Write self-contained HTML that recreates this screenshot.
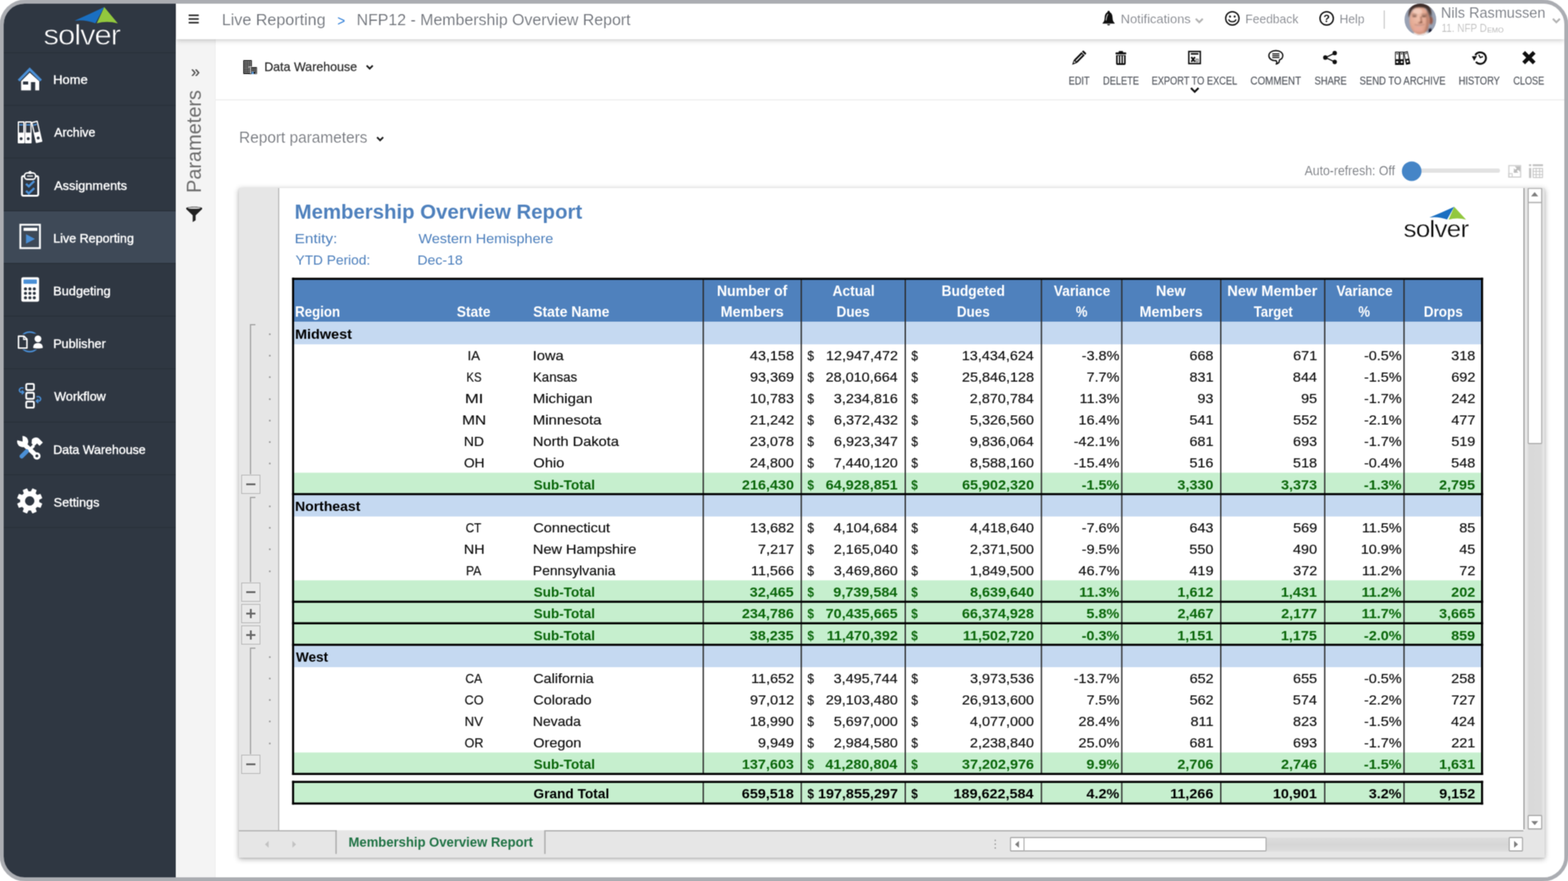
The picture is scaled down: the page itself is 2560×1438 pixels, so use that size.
<!DOCTYPE html><html lang="en"><head><meta charset="utf-8"><title>NFP12 - Membership Overview Report</title><style>
*{box-sizing:border-box}
html,body{margin:0;padding:0;background:#fff}
body{width:2560px;height:1438px;position:relative;overflow:hidden;font-family:"Liberation Sans",sans-serif;color:#333}
div,span,svg{position:absolute}
.t{white-space:nowrap;line-height:1;transform-origin:0 0}
#wrap{left:-8px;top:-8px;width:2576px;height:1454px;background:#fff;will-change:transform;filter:url(#soft)}
#frame{left:7px;top:7px;width:2562px;height:1440px;border-radius:43px;background:#abadb2;overflow:hidden}
#app{left:7px;top:7px;width:2548px;height:1426px;border-radius:34px;background:#fff;overflow:hidden}
#side{left:0;top:0;width:281px;height:1426px;background:#2f3742}
#sideedge{left:281px;top:0;width:3px;height:1426px;background:#fff}
.sep{left:0;width:281px;height:2px;background:#2a313b}
.nav{left:82px;color:#fff;font-weight:700;font-size:19px;letter-spacing:-.2px;height:24px;line-height:24px}
#active{left:0;top:339px;width:281px;height:85px;background:#3e4957}
#top{left:282px;top:0;width:2266px;height:58px;background:#fff;box-shadow:0 2px 8px rgba(0,0,0,.22);z-index:5}
.bc{font-size:26px;color:#7d7d7d;height:32px;line-height:32px;top:11px}
.tr{font-size:20.5px;color:#7a7a7a;height:26px;line-height:26px;top:13px}
#strip{left:282px;top:58px;width:64px;height:1368px;background:#f4f4f4;border-right:1px solid #ececec}
#main{left:346px;top:58px;width:2202px;height:1368px;background:#fff}
.tb{font-size:16.2px;color:#505050;-webkit-text-stroke:.35px #505050;letter-spacing:-.3px;height:20px;line-height:20px;top:116px;text-align:center;transform:translateX(-50%)}
#panel{left:384px;top:301px;width:2132px;height:1093px;background:#fff;box-shadow:0 2px 9px rgba(0,0,0,.32),0 1px 2px rgba(0,0,0,.12)}
#gutter{left:0;top:0;width:66px;height:1049px;background:#e6e6e6;border-right:2px solid #bdbdbd}
#botbar{display:none}
.row{left:89px;width:1942px}
.vl{width:2px;background:#2e2e2e}
.hl{left:87.3px;width:1943.7px;height:3px;background:#000}
.c{font-size:22.6px;height:30px;line-height:30px;color:#222;white-space:nowrap}
.c.b{font-size:23px}
.b{font-weight:700}
.g{color:#0a6a0a}
.k{color:#000}
.r{text-align:right;letter-spacing:.5px;margin-right:-.5px}
.r.b{letter-spacing:.3px;margin-right:-.3px}
.h{color:#fff;font-weight:700;font-size:23px;height:30px;line-height:30px;white-space:nowrap}
.hc{text-align:center;transform:translateX(-50%)}
.cc{text-align:center;transform:translateX(-50%)}
.ob{width:31px;height:31px;border:1.5px solid #a8a8a8;background:#e9e9e9;left:4px}
.ob i{position:absolute;left:7px;top:13px;width:15px;height:3px;background:#666}
.ob b{position:absolute;left:13px;top:7px;width:3px;height:15px;background:#666}
.ol{left:18px;width:2px;background:#a3a3a3}
.ot{left:18px;width:9px;height:2px;background:#a3a3a3}
.od{left:49px;width:3px;height:3px;border-radius:2px;background:#999}
</style></head><body>
<svg width="0" height="0" style="left:0;top:0"><defs><filter id="soft" x="0" y="0" width="100%" height="100%" color-interpolation-filters="sRGB"><feConvolveMatrix order="3" kernelMatrix="0.0625 0.1250 0.0625 0.1250 0.2500 0.1250 0.0625 0.1250 0.0625" edgeMode="duplicate" preserveAlpha="true"/></filter></defs></svg>
<div id="wrap"><div id="frame"><div id="app">
<div id="side">
<div id="active"></div>
<div class="sep" style="top:79px"></div>
<div class="sep" style="top:165px"></div>
<div class="sep" style="top:251px"></div>
<div class="sep" style="top:337px"></div>
<div class="sep" style="top:423px"></div>
<div class="sep" style="top:509px"></div>
<div class="sep" style="top:595px"></div>
<div class="sep" style="top:682px"></div>
<div class="sep" style="top:768px"></div>
<div class="sep" style="top:854px"></div>
<svg style="left:0;top:0" width="1" height="1" overflow="visible"><path d="M115.7,27.8 Q139.9,17.3 164.2,5.6 L149.8,31.9 Q132.8,25.6 115.7,27.8 Z" fill="#1a6fc1"/><path d="M164.2,5.6 L186.4,32.2 Q169.2,27.4 152.0,31.9 Z" fill="#92c83e"/><text transform="translate(65.0 66.7) scale(1.1 1)" x="0" y="0" font-family="Liberation Sans, sans-serif" font-size="46" letter-spacing="-1.5" fill="#fff" stroke="#2f3742" stroke-width="0.9">solver</text></svg>
<svg style="left:20px;top:101px" width="44" height="44" viewBox="0 0 44 44" overflow="visible" ><path d="M22.5,11.5 L8.5,25.5 V40.5 H38 V25.5 Z M11.5,26 H20 V31 H11.5 Z M24.5,27 H31.5 V40.5 H24.5 Z" fill="#fff" fill-rule="evenodd"/><path d="M4.5,24.5 L22.5,6 L41,24.5" fill="none" stroke="#4a8fd6" stroke-width="4.2" stroke-linejoin="miter"/></svg>
<svg style="left:20px;top:187px" width="44" height="44" viewBox="0 0 44 44" overflow="visible" ><rect x="3" y="5" width="11" height="36" rx="1.2" fill="#fff"/><rect x="5" y="7.2" width="7" height="16.2" fill="#2f3742"/><rect x="5.6" y="9.6" width="5.8" height="2.4" fill="#4a8fd6"/><circle cx="8.5" cy="33.5" r="2.4" fill="#2f3742"/><rect x="14.6" y="5" width="11" height="36" rx="1.2" fill="#fff"/><rect x="16.6" y="7.2" width="7" height="16.2" fill="#2f3742"/><rect x="17.2" y="9.6" width="5.8" height="2.4" fill="#4a8fd6"/><circle cx="20.1" cy="33.5" r="2.4" fill="#2f3742"/><g transform="rotate(-13 34 22)"><rect x="28.5" y="4.5" width="11" height="35.5" rx="1.2" fill="#fff"/><rect x="30.5" y="6.7" width="7" height="16.0" fill="#2f3742"/><rect x="31.1" y="9.1" width="5.8" height="2.4" fill="#4a8fd6"/><circle cx="34.0" cy="32.5" r="2.4" fill="#2f3742"/></g></svg>
<svg style="left:20px;top:274px" width="44" height="44" viewBox="0 0 44 44" overflow="visible" ><rect x="9.8" y="7.5" width="26.6" height="32" rx="2.5" fill="none" stroke="#fff" stroke-width="3"/><rect x="14" y="2.2" width="18" height="10.5" rx="4.5" fill="#2f3742" stroke="#fff" stroke-width="2.4"/><circle cx="23" cy="1.5" r="2.6" fill="#fff"/><rect x="18" y="6.4" width="10" height="1.8" rx=".9" fill="#fff"/><path d="M16.5,20 L21,24.2 L30,15.5" fill="none" stroke="#4a8fd6" stroke-width="3.6"/><path d="M16.5,31.5 L21,35.7 L30,27" fill="none" stroke="#4a8fd6" stroke-width="3.6"/></svg>
<svg style="left:20px;top:360px" width="44" height="44" viewBox="0 0 44 44" overflow="visible" ><rect x="7.2" y="0.8" width="32" height="38.2" fill="none" stroke="#fff" stroke-width="3"/><rect x="12.5" y="5.8" width="22.5" height="5" fill="#fff"/><path d="M16.5,16.2 L31,24 L16.5,31.7 Z" fill="#4a8fd6"/></svg>
<svg style="left:20px;top:446px" width="44" height="44" viewBox="0 0 44 44" overflow="visible" ><rect x="8.8" y="0.6" width="29" height="40" rx="3" fill="#fff"/><rect x="12.4" y="4.2" width="21.8" height="7" rx="1" fill="#4a8fd6"/><circle cx="15.6" cy="19.6" r="2.5" fill="#2f3742"/><circle cx="15.6" cy="26.8" r="2.5" fill="#2f3742"/><circle cx="15.6" cy="34.0" r="2.5" fill="#2f3742"/><circle cx="22.8" cy="19.6" r="2.5" fill="#2f3742"/><circle cx="22.8" cy="26.8" r="2.5" fill="#2f3742"/><circle cx="22.8" cy="34.0" r="2.5" fill="#2f3742"/><circle cx="30.0" cy="19.6" r="2.5" fill="#2f3742"/><circle cx="30.0" cy="26.8" r="2.5" fill="#2f3742"/><circle cx="30.0" cy="34.0" r="2.5" fill="#2f3742"/></svg>
<svg style="left:20px;top:532px" width="44" height="44" viewBox="0 0 44 44" overflow="visible" ><g transform="translate(0 -2.5)"><circle cx="22.5" cy="22.5" r="16" fill="none" stroke="#4a8fd6" stroke-width="2.6"/><rect x="1" y="10" width="21" height="25" fill="#2f3742"/><rect x="26" y="9" width="19" height="26" fill="#2f3742"/><path d="M4.2,13.2 H13 L18,18.2 V32.6 H4.2 Z" fill="none" stroke="#fff" stroke-width="2.4" stroke-linejoin="round"/><path d="M12.6,13.4 V18.6 H17.8" fill="none" stroke="#fff" stroke-width="1.8"/><circle cx="36" cy="17.6" r="5.6" fill="#fff"/><path d="M28.2,32.5 C28.2,26.5 31,24.6 36,24.6 C41,24.6 43.8,26.5 43.8,32.5 C41,33.6 31,33.6 28.2,32.5 Z" fill="#fff"/></g></svg>
<svg style="left:20px;top:618px" width="44" height="44" viewBox="0 0 44 44" overflow="visible" ><rect x="16.8" y="2.6" width="12.6" height="10" rx="2" fill="none" stroke="#fff" stroke-width="2.8"/><rect x="16.8" y="17" width="12.6" height="10" rx="2" fill="none" stroke="#fff" stroke-width="2.8"/><rect x="16.8" y="31.4" width="12.6" height="10" rx="2" fill="none" stroke="#fff" stroke-width="2.8"/><path d="M12.5,9.5 C6.5,7.5 3.5,13 7.5,16.2 L11.5,16.2" fill="none" stroke="#4a8fd6" stroke-width="2.2"/><path d="M9.5,13.2 L12.6,16.3 L9.5,19.4" fill="none" stroke="#4a8fd6" stroke-width="2.2"/><path d="M33.5,23.8 C39.5,21.8 42.5,27.3 38.5,30.5 L34.5,30.5" fill="none" stroke="#4a8fd6" stroke-width="2.2"/><path d="M36.5,27.5 L33.4,30.6 L36.5,33.7" fill="none" stroke="#4a8fd6" stroke-width="2.2"/></svg>
<svg style="left:20px;top:705px" width="44" height="44" viewBox="0 0 44 44" overflow="visible" ><g transform="translate(0 -2.8)"><path d="M8,12 L34,36" stroke="#fff" stroke-width="7.5" stroke-linecap="round" fill="none"/><circle cx="11" cy="12.5" r="9.2" fill="#fff"/><path d="M11,12.5 L2,1 L20,0 Z" fill="#2f3742" transform="rotate(-38 11 12.5)"/><circle cx="34.2" cy="36" r="6" fill="#fff"/><circle cx="34.2" cy="36" r="2.4" fill="#2f3742"/><path d="M26,9 C30,5 35,5 38,8 L44,14 L38.5,19.5 L34.5,15.5 L30,20 L25.5,15.5 Z" fill="#fff"/><path d="M25.5,19.5 L29,23" stroke="#fff" stroke-width="6" fill="none"/><path d="M9.5,36.5 L17.5,28.5" stroke="#4a8fd6" stroke-width="7" stroke-linecap="round" fill="none"/></g></svg>
<svg style="left:20px;top:791px" width="44" height="44" viewBox="0 0 44 44" overflow="visible" ><path d="M37.09,17.10 L42.45,17.44 L42.45,23.76 L37.09,24.10 L35.29,28.44 L38.84,32.47 L34.37,36.94 L30.34,33.39 L26.00,35.19 L25.66,40.55 L19.34,40.55 L19.00,35.19 L14.66,33.39 L10.63,36.94 L6.16,32.47 L9.71,28.44 L7.91,24.10 L2.55,23.76 L2.55,17.44 L7.91,17.10 L9.71,12.76 L6.16,8.73 L10.63,4.26 L14.66,7.81 L19.00,6.01 L19.34,0.65 L25.66,0.65 L26.00,6.01 L30.34,7.81 L34.37,4.26 L38.84,8.73 L35.29,12.76 Z M30.9,20.6 A8.4,8.4 0 1 0 14.1,20.6 A8.4,8.4 0 1 0 30.9,20.6 Z" fill="#fff" fill-rule="evenodd" stroke="#fff" stroke-width="1.5" stroke-linejoin="round" transform="rotate(22.5 22.5 20.6)"/></svg>
</div><div id="sideedge"></div>
<div id="top">
<svg style="left:20px;top:17px" width="18" height="16" viewBox="0 0 18 16" overflow="visible" ><path d="M0,2 H16.5 M0,8 H16.5 M0,14 H16.5" stroke="#222" stroke-width="2.7" fill="none"/></svg>
<svg style="left:1511px;top:11px" width="22" height="26" viewBox="0 0 22 26" overflow="visible" ><path d="M11,2.6 C6.2,3.2 4.8,7.5 4.6,12 C4.4,16.5 3.4,18.6 1.2,20.4 L1.2,21.6 H20.8 V20.4 C18.6,18.6 17.6,16.5 17.4,12 C17.2,7.5 15.8,3.2 11,2.6 Z" fill="#0f0f0f"/><circle cx="11" cy="2.4" r="1.9" fill="#0f0f0f"/><path d="M8.4,22.6 A2.7,2.7 0 0 0 13.6,22.6 Z" fill="#0f0f0f"/><path d="M6.8,16.5 C7.4,12 7.6,8.4 10,6" stroke="#fff" stroke-width="1.1" fill="none"/></svg>
<svg style="left:1663px;top:23px" width="14" height="10" viewBox="0 0 14 10" overflow="visible" ><path d="M1.3,1.6 L7,7.3 L12.7,1.6" fill="none" stroke="#b3b3b3" stroke-width="3"/></svg>
<svg style="left:1711.4px;top:10.7px" width="26" height="26" viewBox="0 0 26 26" overflow="visible" ><circle cx="13" cy="13" r="10.9" fill="none" stroke="#0f0f0f" stroke-width="2.2"/><circle cx="9.2" cy="10" r="1.7" fill="#0f0f0f"/><circle cx="16.8" cy="10" r="1.7" fill="#0f0f0f"/><path d="M7,14.6 C8.6,19.8 17.4,19.8 19,14.6" fill="none" stroke="#0f0f0f" stroke-width="2"/></svg>
<svg style="left:1864.6999999999998px;top:10.7px" width="26" height="26" viewBox="0 0 26 26" overflow="visible" ><circle cx="13" cy="13" r="10.9" fill="none" stroke="#0f0f0f" stroke-width="2.3"/><text x="13" y="19.2" text-anchor="middle" font-family="Liberation Sans, sans-serif" font-weight="700" font-size="17" fill="#0f0f0f">?</text></svg>
<div style="left:1971px;top:10.5px;width:2px;height:30.5px;background:#cfcfcf"></div>
<svg style="left:2005.3000000000002px;top:-0.3999999999999986px" width="52" height="52" viewBox="0 0 52 52" overflow="visible" ><defs><clipPath id="avc"><circle cx="26" cy="26" r="25.9"/></clipPath><filter id="avb" x="-20%" y="-20%" width="140%" height="140%"><feGaussianBlur stdDeviation="0.9"/></filter><radialGradient id="avg" cx="0.42" cy="0.38" r="0.75"><stop offset="0" stop-color="#efc0ab"/><stop offset="0.55" stop-color="#e3a892"/><stop offset="1" stop-color="#c98a74"/></radialGradient></defs><g clip-path="url(#avc)"><rect x="-4" y="-4" width="60" height="60" fill="#99a2b4"/><g filter="url(#avb)"><path d="M10,60 C12,48 18,44 26,46 C34,44 42,47 46,60 Z" fill="#f6f3f1"/><path d="M39,41.5 L43.6,40 L45,46.5 L40.5,48.5 Z" fill="#15152a"/><ellipse cx="43.2" cy="27.5" rx="3.2" ry="6.4" fill="#93594a"/><ellipse cx="24.6" cy="27.5" rx="16.4" ry="23" fill="url(#avg)"/><path d="M36.5,12 C40,18 41,28 39,40 C37,45 34,48 31,50 C35,42 36.5,30 35,18 Z" fill="#b27a66" opacity=".75"/><path d="M7,23 C5,8 13,-2 26,-2 C39,-2 46,7 44,24 C43,17 40.5,11 34,7.6 C26,5.2 16,6 12.4,10.6 C10,14 9.4,19 7,23 Z" fill="#3f2f29"/><path d="M37.5,8 C41.5,12 43,19 41.6,25 C40,20 39,14 36,10 Z" fill="#5a4a44"/><ellipse cx="21.5" cy="12.5" rx="7.5" ry="4.6" fill="#f3cdbd" opacity=".9"/><ellipse cx="16.4" cy="20.6" rx="3.6" ry="1.5" fill="#7b564b"/><ellipse cx="31.8" cy="20.6" rx="3.8" ry="1.6" fill="#74503f"/><path d="M12,18.2 C15,16.6 18,16.8 20.5,18 M28,18 C31,16.6 34,16.8 36.5,18.4" stroke="#8a6456" stroke-width="1.2" fill="none"/><path d="M26.5,21 C27.5,25 28,28 27,30.6 C25.6,31.6 24,31.4 22.6,30.6" stroke="#9a5d48" stroke-width="2.2" fill="none" opacity=".85"/><ellipse cx="27.4" cy="30.2" rx="2" ry="1.5" fill="#7c4a38"/><path d="M16.5,34.2 C20,36.6 29,36.8 32.6,33.8 C30,38 20,38.2 16.5,34.2 Z" fill="#d9b3b1"/><path d="M16.5,34.2 C20,35.4 29,35.4 32.6,33.8" stroke="#a86a5c" stroke-width="1" fill="none"/><ellipse cx="23" cy="42" rx="8" ry="3.4" fill="#e9a99a" opacity=".8"/></g></g></svg>
<svg style="left:2246px;top:23px" width="14" height="10" viewBox="0 0 14 10" overflow="visible" ><path d="M1.3,1.6 L7,7.3 L12.7,1.6" fill="none" stroke="#b3b3b3" stroke-width="3"/></svg>
</div>
<div id="strip">
<div class="t " style="left:23px;top:39px;font-size:26px;color:#555;width:16px;height:28px;line-height:28px;text-align:center">&raquo;</div>
<svg style="left:15px;top:273px" width="28" height="26" viewBox="0 0 28 26" overflow="visible" ><path d="M1,2.2 C6,0 22,0 27,2.2 L27,4.2 L16.4,14.6 V22.4 L11.6,25.6 V14.6 L1,4.2 Z" fill="#222"/><ellipse cx="14" cy="2.6" rx="10.5" ry="1.2" fill="#f4f4f4"/></svg>
</div>
<div id="main">
<svg style="left:45px;top:33.7px" width="24" height="24" viewBox="0 0 24 24" overflow="visible" ><rect x="0.2" y="0.2" width="14" height="22.6" fill="#0f0f0f"/><rect x="9.2" y="11.6" width="13.3" height="11.2" fill="#0f0f0f"/><path d="M8.6,11.2 H14.8 V11.2" stroke="#fff" stroke-width="0.9" fill="none"/><rect x="2.10" y="2.20" width="1.7" height="1.9" fill="#fff"/><rect x="2.10" y="5.50" width="1.7" height="1.9" fill="#fff"/><rect x="2.10" y="8.80" width="1.7" height="1.9" fill="#fff"/><rect x="2.10" y="12.10" width="1.7" height="1.9" fill="#fff"/><rect x="2.10" y="15.40" width="1.7" height="1.9" fill="#fff"/><rect x="2.10" y="18.70" width="1.7" height="1.9" fill="#fff"/><rect x="5.05" y="2.20" width="1.7" height="1.9" fill="#fff"/><rect x="5.05" y="5.50" width="1.7" height="1.9" fill="#fff"/><rect x="5.05" y="8.80" width="1.7" height="1.9" fill="#fff"/><rect x="5.05" y="12.10" width="1.7" height="1.9" fill="#fff"/><rect x="5.05" y="15.40" width="1.7" height="1.9" fill="#fff"/><rect x="5.05" y="18.70" width="1.7" height="1.9" fill="#fff"/><rect x="8.00" y="2.20" width="1.7" height="1.9" fill="#fff"/><rect x="8.00" y="5.50" width="1.7" height="1.9" fill="#fff"/><rect x="8.00" y="8.80" width="1.7" height="1.9" fill="#fff"/><rect x="8.00" y="12.10" width="1.7" height="1.9" fill="#fff"/><rect x="8.00" y="15.40" width="1.7" height="1.9" fill="#fff"/><rect x="8.00" y="18.70" width="1.7" height="1.9" fill="#fff"/><rect x="10.95" y="2.20" width="1.7" height="1.9" fill="#fff"/><rect x="10.95" y="5.50" width="1.7" height="1.9" fill="#fff"/><rect x="10.95" y="8.80" width="1.7" height="1.9" fill="#fff"/><rect x="10.95" y="12.10" width="1.7" height="1.9" fill="#fff"/><rect x="10.95" y="15.40" width="1.7" height="1.9" fill="#fff"/><rect x="10.95" y="18.70" width="1.7" height="1.9" fill="#fff"/><rect x="11.10" y="13.80" width="1.6" height="1.7" fill="#fff"/><rect x="11.10" y="17.00" width="1.6" height="1.7" fill="#fff"/><rect x="11.10" y="20.20" width="1.6" height="1.7" fill="#fff"/><rect x="14.00" y="13.80" width="1.6" height="1.7" fill="#fff"/><rect x="14.00" y="17.00" width="1.6" height="1.7" fill="#fff"/><rect x="16.90" y="13.80" width="1.6" height="1.7" fill="#fff"/><rect x="16.90" y="17.00" width="1.6" height="1.7" fill="#fff"/><rect x="19.80" y="13.80" width="1.6" height="1.7" fill="#fff"/><rect x="19.80" y="17.00" width="1.6" height="1.7" fill="#fff"/><rect x="19.80" y="20.20" width="1.6" height="1.7" fill="#fff"/><rect x="13.6" y="19.2" width="3.8" height="3.8" fill="#5b9bdc"/></svg>
<svg style="left:245px;top:41px" width="14" height="10" viewBox="0 0 14 10" overflow="visible" ><path d="M1.6,2 L6.6,7 L11.6,2" fill="none" stroke="#1a1a1a" stroke-width="2.7"/></svg>
<svg style="left:1394px;top:15px" width="32" height="32" viewBox="0 0 32 32" overflow="visible" ><g transform="translate(-0.9 0.9) rotate(45 16 15)"><rect x="12.3" y="0.6" width="7.4" height="22" rx="1.4" fill="#0f0f0f"/><rect x="15.2" y="6.6" width="1.7" height="14.6" fill="#fff"/><rect x="11.8" y="3.7" width="8.4" height="1.3" fill="#fff"/><path d="M12.3,22.5 H19.7 L16,30.2 Z" fill="#0f0f0f"/><path d="M14.2,23.4 H17.8 L16,26.6 Z" fill="#fff"/></g></svg>
<svg style="left:1462px;top:15px" width="32" height="32" viewBox="0 0 32 32" overflow="visible" ><rect x="7.2" y="6.6" width="17.6" height="3.2" rx="1.4" fill="#0f0f0f"/><rect x="12.4" y="4.2" width="7.2" height="3.4" rx="1.4" fill="#0f0f0f"/><path d="M8.2,11 H23.8 V24.6 C23.8,26 23,26.9 21.8,26.9 H10.2 C9,26.9 8.2,26 8.2,24.6 Z" fill="#0f0f0f"/><rect x="10.8" y="12" width="2" height="12.2" fill="#fff"/><rect x="15" y="12" width="2" height="12.2" fill="#fff"/><rect x="19.2" y="12" width="2" height="12.2" fill="#fff"/></svg>
<svg style="left:1582px;top:15px" width="32" height="32" viewBox="0 0 32 32" overflow="visible" ><rect x="6.9" y="5.0" width="18.8" height="19.8" fill="#fff" stroke="#0f0f0f" stroke-width="2.3"/><rect x="10.2" y="7.6" width="12.4" height="2.6" fill="#0f0f0f"/><path d="M11,14.2 L17,21.8 M17,14.2 L11,21.8" stroke="#0f0f0f" stroke-width="2.7" fill="none"/><rect x="18.6" y="17.4" width="3.6" height="4.6" fill="#ddd" stroke="#555" stroke-width="1"/></svg>
<svg style="left:1715px;top:15px" width="32" height="32" viewBox="0 0 32 32" overflow="visible" ><path d="M16,3.6 C8.8,3.6 4.6,7.2 4.6,11.8 C4.6,16.4 8.8,20 14.6,20 C15.2,20 15.8,20 16.4,19.9 C17.6,21.4 18.2,23.2 16.6,25.6 C20.4,24.6 22,22 21.8,19 C25.4,17.6 27.4,15 27.4,11.8 C27.4,7.2 23.2,3.6 16,3.6 Z" fill="#fff" stroke="#0f0f0f" stroke-width="2.1" stroke-linejoin="round"/><path d="M10.2,8.8 H21.8 M10.2,11.8 H21.8 M10.2,14.8 H21.8" stroke="#0f0f0f" stroke-width="1.8"/></svg>
<svg style="left:1804px;top:15px" width="32" height="32" viewBox="0 0 32 32" overflow="visible" ><path d="M23,7.8 L8.2,14.9 L23,22" fill="none" stroke="#0f0f0f" stroke-width="1.9"/><circle cx="23.1" cy="7.7" r="3.6" fill="#0f0f0f"/><circle cx="7.8" cy="14.9" r="3.6" fill="#0f0f0f"/><circle cx="23.1" cy="22.1" r="3.6" fill="#0f0f0f"/></svg>
<svg style="left:1922px;top:15px" width="32" height="32" viewBox="0 0 32 32" overflow="visible" ><rect x="3.6" y="5.4" width="7.2" height="21.6" fill="#0f0f0f"/><rect x="4.9" y="6.9" width="4.6" height="10.8" fill="#fff"/><rect x="5.800000000000001" y="8.0" width="2.8" height="1.5" fill="#0f0f0f"/><circle cx="7.2" cy="22.2" r="1.7" fill="#fff"/><rect x="10.9" y="5.4" width="7.2" height="21.6" fill="#0f0f0f"/><rect x="12.200000000000001" y="6.9" width="4.6" height="10.8" fill="#fff"/><rect x="13.100000000000001" y="8.0" width="2.8" height="1.5" fill="#0f0f0f"/><circle cx="14.5" cy="22.2" r="1.7" fill="#fff"/><g transform="rotate(-12 23 16)"><rect x="19.4" y="5" width="7.2" height="21.2" fill="#0f0f0f"/><rect x="20.7" y="6.5" width="4.6" height="10.6" fill="#fff"/><rect x="21.599999999999998" y="7.6" width="2.8" height="1.5" fill="#0f0f0f"/><circle cx="23.0" cy="21.4" r="1.7" fill="#fff"/></g></svg>
<svg style="left:2047px;top:15px" width="32" height="32" viewBox="0 0 32 32" overflow="visible" ><path d="M9.6,11.0 A9.4,9.4 0 1 1 10.6,22.0" fill="none" stroke="#0f0f0f" stroke-width="3"/><path d="M4.0,13.0 L12.6,12.2 L7.8,20.2 Z" fill="#0f0f0f"/><path d="M15.3,10.2 L17.8,14.9 L22.2,13.3" fill="none" stroke="#0f0f0f" stroke-width="2"/></svg>
<svg style="left:2128px;top:15px" width="32" height="32" viewBox="0 0 32 32" overflow="visible" ><path d="M7.6,6.6 L24.8,23.8 M24.8,6.6 L7.6,23.8" stroke="#0f0f0f" stroke-width="6.3" fill="none"/></svg>
<svg style="left:1591.4px;top:78.1px" width="16" height="11" viewBox="0 0 16 11" overflow="visible" ><path d="M1.4,1.6 L7.6,7.8 L13.8,1.6" fill="none" stroke="#111" stroke-width="3.1"/></svg>
<div style="left:0;top:98px;width:2202px;height:2px;background:#efefef"></div>
<svg style="left:262px;top:158px" width="14" height="10" viewBox="0 0 14 10" overflow="visible" ><path d="M1.6,2 L6.6,7 L11.6,2" fill="none" stroke="#1a1a1a" stroke-width="2.7"/></svg>
<div style="left:1964px;top:211px;width:133px;height:7px;border-radius:4px;background:#e2e2e2"></div>
<svg style="left:0;top:0" width="2202" height="300"><circle cx="1952.8" cy="215.4" r="16" fill="#4585c7"/></svg>
<svg style="left:0;top:0" width="2202" height="300" viewBox="0 0 2202 300"><rect x="2111.45" y="206.35" width="19.20" height="18.60" fill="none" stroke="#d0d0d0" stroke-width="1.9"/><rect x="2111.35" y="219.45" width="5.50" height="5.60" fill="none" stroke="#d0d0d0" stroke-width="1.7"/><path d="M2120.20,217.40 L2128.60,208.60" stroke="#bdbdbd" stroke-width="3.4" fill="none"/><path d="M2121.00,207.60 L2130.00,207.40 L2129.80,216.40 Z" fill="#bdbdbd"/><path d="M2119.60,210.40 L2119.60,218.00 L2127.00,218.00 Z" fill="#bdbdbd"/><rect x="2144.30" y="204.00" width="3.60" height="3.30" fill="#c4c4c4"/><rect x="2144.30" y="210.20" width="3.60" height="16.30" fill="#c4c4c4"/><rect x="2150.40" y="204.00" width="16.80" height="3.30" fill="#c4c4c4"/><rect x="2151.15" y="210.95" width="15.30" height="14.80" fill="none" stroke="#c6c6c6" stroke-width="1.5"/><rect x="2155.30" y="210.20" width="1.40" height="16.30" fill="#c6c6c6"/><rect x="2150.40" y="214.93" width="16.80" height="1.40" fill="#c6c6c6"/><rect x="2160.90" y="210.20" width="1.40" height="16.30" fill="#c6c6c6"/><rect x="2150.40" y="220.37" width="16.80" height="1.40" fill="#c6c6c6"/></svg>

</div>
<div id="panel">
<div id="gutter">
<div class="ot" style="top:222px"></div>
<div class="ol" style="top:222px;height:244.97500000000002px"></div>
<div class="ob" style="top:467.975px"><i></i></div>
<div class="ot" style="top:504.03999999999996px"></div>
<div class="ol" style="top:504.03999999999996px;height:138.58500000000004px"></div>
<div class="ob" style="top:643.625px"><i></i></div>
<div class="ob" style="top:678.7550000000001px"><i></i><b></b></div>
<div class="ob" style="top:713.885px"><i></i><b></b></div>
<div class="ot" style="top:749.95px"></div>
<div class="ol" style="top:749.95px;height:173.71499999999992px"></div>
<div class="ob" style="top:924.665px"><i></i></div>
<div class="od" style="top:237.1px"></div>
<div class="od" style="top:272.2px"></div>
<div class="od" style="top:307.3px"></div>
<div class="od" style="top:342.5px"></div>
<div class="od" style="top:377.6px"></div>
<div class="od" style="top:412.7px"></div>
<div class="od" style="top:447.8px"></div>
<div class="od" style="top:518.1px"></div>
<div class="od" style="top:553.2px"></div>
<div class="od" style="top:588.4px"></div>
<div class="od" style="top:623.5px"></div>
<div class="od" style="top:764.0px"></div>
<div class="od" style="top:799.1px"></div>
<div class="od" style="top:834.3px"></div>
<div class="od" style="top:869.4px"></div>
<div class="od" style="top:904.5px"></div>
</div>
<svg style="left:0;top:0" width="1" height="1" overflow="visible"><path d="M1943.8,48.0 Q1964.0,39.9 1984.2,30.5 L1972.6,51.3 Q1958.2,46.1 1943.8,48.0 Z" fill="#1a6fc1"/><path d="M1984.2,30.5 L2003.6,51.5 Q1989.3,47.6 1975.1,51.5 Z" fill="#92c83e"/><text transform="translate(1901.4 80.4) scale(1.1 1)" x="0" y="0" font-family="Liberation Sans, sans-serif" font-size="38.6" letter-spacing="-1.1" fill="#0a0a0a" stroke="#fff" stroke-width="0.5">solver</text></svg>
<svg style="left:0;top:0" width="2132" height="1049" viewBox="0 0 2132 1049"><rect x="89.20" y="148.80" width="1939.80" height="69.45" fill="#4f81bd"/><rect x="89.20" y="218.25" width="1939.80" height="36.78" fill="#c5d9f1"/><rect x="89.20" y="464.56" width="1939.80" height="34.98" fill="#c6efce"/><rect x="89.20" y="499.54" width="1939.80" height="36.53" fill="#c5d9f1"/><rect x="89.20" y="640.21" width="1939.80" height="34.98" fill="#c6efce"/><rect x="89.20" y="675.34" width="1939.80" height="34.98" fill="#c6efce"/><rect x="89.20" y="710.47" width="1939.80" height="34.98" fill="#c6efce"/><rect x="89.20" y="745.45" width="1939.80" height="36.53" fill="#c5d9f1"/><rect x="89.20" y="921.25" width="1939.80" height="34.98" fill="#c6efce"/><rect x="89.20" y="969.95" width="1939.80" height="33.85" fill="#c6efce"/><rect x="757.15" y="148.80" width="2.10" height="807.43" fill="#2b2b2b"/><rect x="757.15" y="969.95" width="2.10" height="33.85" fill="#2b2b2b"/><rect x="917.15" y="148.80" width="2.10" height="807.43" fill="#2b2b2b"/><rect x="917.15" y="969.95" width="2.10" height="33.85" fill="#2b2b2b"/><rect x="1086.95" y="148.80" width="2.10" height="807.43" fill="#2b2b2b"/><rect x="1086.95" y="969.95" width="2.10" height="33.85" fill="#2b2b2b"/><rect x="1309.25" y="148.80" width="2.10" height="807.43" fill="#2b2b2b"/><rect x="1309.25" y="969.95" width="2.10" height="33.85" fill="#2b2b2b"/><rect x="1440.45" y="148.80" width="2.10" height="807.43" fill="#2b2b2b"/><rect x="1440.45" y="969.95" width="2.10" height="33.85" fill="#2b2b2b"/><rect x="1602.05" y="148.80" width="2.10" height="807.43" fill="#2b2b2b"/><rect x="1602.05" y="969.95" width="2.10" height="33.85" fill="#2b2b2b"/><rect x="1771.75" y="148.80" width="2.10" height="807.43" fill="#2b2b2b"/><rect x="1771.75" y="969.95" width="2.10" height="33.85" fill="#2b2b2b"/><rect x="1901.25" y="148.80" width="2.10" height="807.43" fill="#2b2b2b"/><rect x="1901.25" y="969.95" width="2.10" height="33.85" fill="#2b2b2b"/><rect x="86.80" y="146.35" width="1944.60" height="3.45" fill="#000"/><rect x="86.80" y="497.82" width="1944.60" height="3.44" fill="#000"/><rect x="86.80" y="673.47" width="1944.60" height="3.44" fill="#000"/><rect x="86.80" y="708.60" width="1944.60" height="3.44" fill="#000"/><rect x="86.80" y="743.73" width="1944.60" height="3.44" fill="#000"/><rect x="86.80" y="954.51" width="1944.60" height="3.44" fill="#000"/><rect x="86.80" y="146.35" width="3.40" height="811.60" fill="#000"/><rect x="2028.00" y="146.35" width="3.40" height="811.60" fill="#000"/><rect x="86.80" y="967.50" width="1944.60" height="3.45" fill="#000"/><rect x="86.80" y="1002.80" width="1944.60" height="3.45" fill="#000"/><rect x="86.80" y="967.50" width="3.40" height="38.75" fill="#000"/><rect x="2028.00" y="967.50" width="3.40" height="38.75" fill="#000"/></svg>
<svg style="left:0;top:0" width="2132" height="1093" viewBox="0 0 2132 1093"><defs><linearGradient id="vtr" x1="0" x2="1" y1="0" y2="0"><stop offset="0" stop-color="#e9e9e9"/><stop offset="0.14" stop-color="#e4e4e4"/><stop offset="0.2" stop-color="#d9d9d9"/><stop offset="0.84" stop-color="#dadada"/><stop offset="0.9" stop-color="#e5e5e5"/><stop offset="1" stop-color="#e3e3e3"/></linearGradient><linearGradient id="htr" x1="0" x2="0" y1="0" y2="1"><stop offset="0" stop-color="#dcdcdc"/><stop offset="0.5" stop-color="#d6d6d6"/><stop offset="1" stop-color="#dddddd"/></linearGradient></defs><rect x="2099.20" y="-1.00" width="33.00" height="1049.50" fill="url(#vtr)" /><rect x="2097.10" y="-1.00" width="2.10" height="1047.80" fill="#a0a0a0" /><rect x="2105.10" y="0.50" width="21.90" height="23.10" fill="#fff" stroke="#a3a3a3" stroke-width="1.6" rx="0.8"/><path d="M2109.70,13.40 L2115.55,6.60 L2121.40,13.40 Z" fill="#7d7d7d"/><rect x="2105.10" y="23.60" width="21.90" height="393.30" fill="#fff" stroke="#a8a8a8" stroke-width="1.6" rx="0.8"/><rect x="2105.10" y="1024.10" width="21.90" height="21.80" fill="#fff" stroke="#a3a3a3" stroke-width="1.6" rx="0.8"/><path d="M2110.00,1033.20 L2121.30,1033.20 L2115.65,1039.70 Z" fill="#7d7d7d"/><rect x="0.00" y="1048.20" width="2132.20" height="44.80" fill="#e6e6e6" /><rect x="0.00" y="1048.00" width="159.60" height="2.10" fill="#b4b4b4" /><rect x="157.60" y="1048.00" width="2.10" height="38.80" fill="#a9a9a9" /><rect x="498.60" y="1048.00" width="2.10" height="38.80" fill="#a9a9a9" /><rect x="500.70" y="1048.00" width="1596.50" height="2.10" fill="#adadad" /><path d="M48.60,1065.60 L42.60,1071.20 L48.60,1076.80 Z" fill="#c2c2c2"/><path d="M87.40,1065.60 L93.40,1071.20 L87.40,1076.80 Z" fill="#c2c2c2"/><rect x="1233.80" y="1063.60" width="2.20" height="2.20" fill="#9a9a9a" /><rect x="1233.80" y="1069.80" width="2.20" height="2.20" fill="#9a9a9a" /><rect x="1233.80" y="1076.00" width="2.20" height="2.20" fill="#9a9a9a" /><rect x="1259.00" y="1060.20" width="837.30" height="22.60" fill="url(#htr)" /><rect x="1259.80" y="1060.10" width="22.00" height="21.80" fill="#fff" stroke="#a3a3a3" stroke-width="1.6" rx="0.8"/><path d="M1273.60,1065.60 L1267.20,1071.20 L1273.60,1076.80 Z" fill="#7d7d7d"/><rect x="1281.80" y="1060.10" width="395.20" height="21.80" fill="#fff" stroke="#a8a8a8" stroke-width="1.6" rx="0.8"/><rect x="2074.10" y="1060.10" width="21.50" height="21.80" fill="#fff" stroke="#a3a3a3" stroke-width="1.6" rx="0.8"/><path d="M2082.00,1065.60 L2088.40,1071.20 L2082.00,1076.80 Z" fill="#7d7d7d"/></svg>
<div id="botbar">

</div>
</div>
</div></div>
<div id="txt" style="left:8px;top:8px;width:2560px;height:1438px;z-index:9">
<div class="t" style="left:86px;top:120.15px;font-size:20.3px;color:#fff;transform:translate(0.83px,0) scaleX(1.0414);-webkit-text-stroke:.5px #fff;">Home</div>
<div class="t" style="left:88px;top:206.15px;font-size:20.3px;color:#fff;transform:translate(0.50px,0) scaleX(0.9925);-webkit-text-stroke:.5px #fff;">Archive</div>
<div class="t" style="left:88px;top:293.15px;font-size:20.3px;color:#fff;transform:translate(0.50px,0) scaleX(1.0246);-webkit-text-stroke:.5px #fff;">Assignments</div>
<div class="t" style="left:86px;top:379.15px;font-size:20.3px;color:#fff;transform:translate(0.89px,0) scaleX(1.0070);-webkit-text-stroke:.5px #fff;">Live Reporting</div>
<div class="t" style="left:86px;top:465.15px;font-size:20.3px;color:#fff;transform:translate(0.86px,0) scaleX(1.0267);-webkit-text-stroke:.5px #fff;">Budgeting</div>
<div class="t" style="left:86px;top:551.15px;font-size:20.3px;color:#fff;transform:translate(0.88px,0) scaleX(1.0137);-webkit-text-stroke:.5px #fff;">Publisher</div>
<div class="t" style="left:88px;top:637.15px;font-size:20.3px;color:#fff;transform:translate(0.50px,0) scaleX(1.0140);-webkit-text-stroke:.5px #fff;">Workflow</div>
<div class="t" style="left:86px;top:724.15px;font-size:20.3px;color:#fff;transform:translate(0.91px,0) scaleX(0.9961);-webkit-text-stroke:.5px #fff;">Data Warehouse</div>
<div class="t" style="left:87px;top:810.15px;font-size:20.3px;color:#fff;transform:translate(0.58px,0) scaleX(1.0209);-webkit-text-stroke:.5px #fff;">Settings</div>
<div class="t" style="left:362px;top:20.40px;font-size:25.8px;color:#6c7077;transform:translate(0.15px,0) scaleX(1.0184);-webkit-text-stroke:.22px #fff;">Live Reporting</div>
<div class="t" style="left:550px;top:22.55px;font-size:23.5px;color:#2f7fd8;transform:translate(0.78px,0) scaleX(0.9304);">&gt;</div>
<div class="t" style="left:582px;top:20.40px;font-size:25.8px;color:#6c7077;transform:translate(0.17px,0) scaleX(1.0065);-webkit-text-stroke:.22px #fff;">NFP12 - Membership Overview Report</div>
<div class="t" style="left:1829px;top:22.40px;font-size:19.8px;color:#7c7f86;transform:translate(0.80px,0) scaleX(1.0602);-webkit-text-stroke:.22px #fff;">Notifications</div>
<div class="t" style="left:2033px;top:22.40px;font-size:19.8px;color:#7c7f86;transform:translate(0.21px,0) scaleX(0.9959);-webkit-text-stroke:.22px #fff;">Feedback</div>
<div class="t" style="left:2186px;top:22.40px;font-size:19.8px;color:#7c7f86;transform:translate(0.89px,0) scaleX(1.0050);-webkit-text-stroke:.22px #fff;">Help</div>
<div class="t" style="left:2352px;top:9.70px;font-size:23.2px;color:#70747c;transform:translate(0.46px,0) scaleX(1.0189);-webkit-text-stroke:.22px #fff;">Nils Rasmussen</div>
<div class="t" style="left:2353px;top:37.45px;font-size:18.7px;color:#b9b9b9;transform:translate(0.39px,0) scaleX(0.8674);-webkit-text-stroke:.22px #fff;">11. NFP D</div>
<div class="t" style="left:2427px;top:43.65px;font-size:11.3px;color:#b9b9b9;transform:translate(0.96px,0) scaleX(1.0472);">EMO</div>
<div class="t" style="left:311px;top:103.80px;font-size:27px;color:#555;transform:translate(0.66px,0) scaleX(0.9940);">&raquo;</div>
<div class="t" style="left:329.30px;top:314.84px;font-size:32.6px;color:#6e6e6e;transform-origin:0 0;transform:rotate(-90deg) scaleX(0.9980) translateY(-27.60px)">Parameters</div>
<div class="t" style="left:431px;top:98.50px;font-size:20.6px;color:#2b2b2b;transform:translate(0.42px,0) scaleX(0.9857);-webkit-text-stroke:.3px #2b2b2b;">Data Warehouse</div>
<div class="t" style="left:1744px;top:123.25px;font-size:18.1px;color:#575b62;transform:translate(0.74px,0) scaleX(0.8259);-webkit-text-stroke:.25px #575b62;">EDIT</div>
<div class="t" style="left:1800px;top:123.25px;font-size:18.1px;color:#575b62;transform:translate(0.83px,0) scaleX(0.8353);-webkit-text-stroke:.25px #575b62;">DELETE</div>
<div class="t" style="left:1880px;top:123.25px;font-size:18.1px;color:#575b62;transform:translate(0.13px,0) scaleX(0.8344);-webkit-text-stroke:.25px #575b62;">EXPORT TO EXCEL</div>
<div class="t" style="left:2041px;top:123.25px;font-size:18.1px;color:#575b62;transform:translate(0.60px,0) scaleX(0.8835);-webkit-text-stroke:.25px #575b62;">COMMENT</div>
<div class="t" style="left:2146px;top:123.25px;font-size:18.1px;color:#575b62;transform:translate(0.23px,0) scaleX(0.8423);-webkit-text-stroke:.25px #575b62;">SHARE</div>
<div class="t" style="left:2219px;top:123.25px;font-size:18.1px;color:#575b62;transform:translate(0.82px,0) scaleX(0.8534);-webkit-text-stroke:.25px #575b62;">SEND TO ARCHIVE</div>
<div class="t" style="left:2381px;top:123.25px;font-size:18.1px;color:#575b62;transform:translate(0.62px,0) scaleX(0.8420);-webkit-text-stroke:.25px #575b62;">HISTORY</div>
<div class="t" style="left:2470px;top:123.25px;font-size:18.1px;color:#575b62;transform:translate(0.76px,0) scaleX(0.8209);-webkit-text-stroke:.25px #575b62;">CLOSE</div>
<div class="t" style="left:390px;top:212.40px;font-size:25.8px;color:#74777d;transform:translate(0.34px,0) scaleX(0.9742);-webkit-text-stroke:.22px #fff;">Report parameters</div>
<div class="t" style="left:2129px;top:268.60px;font-size:21.4px;color:#74777d;transform:translate(0.90px,0) scaleX(0.9357);-webkit-text-stroke:.22px #fff;">Auto-refresh: Off</div>
<div class="t" style="left:480px;top:330.35px;font-size:32.9px;color:#4f81bd;font-weight:700;transform:translate(0.92px,0) scaleX(1.0115);">Membership Overview Report</div>
<div class="t" style="left:481px;top:377.85px;font-size:22.9px;color:#4f81bd;transform:translate(0.02px,0) scaleX(1.0975);">Entity:</div>
<div class="t" style="left:683px;top:377.85px;font-size:22.9px;color:#4f81bd;transform:translate(0.20px,0) scaleX(1.0261);">Western Hemisphere</div>
<div class="t" style="left:482px;top:412.85px;font-size:22.9px;color:#4f81bd;transform:translate(0.51px,0) scaleX(0.9782);">YTD Period:</div>
<div class="t" style="left:681px;top:412.85px;font-size:22.9px;color:#4f81bd;transform:translate(0.50px,0) scaleX(1.0016);">Dec-18</div>
<div class="t" style="left:481px;top:497.80px;font-size:23.0px;color:#fff;font-weight:700;transform:translate(0.68px,0) scaleX(0.9455);">Region</div>
<div class="t" style="left:745px;top:497.80px;font-size:23.0px;color:#fff;font-weight:700;transform:translate(0.81px,0) scaleX(0.9791);">State</div>
<div class="t" style="left:870px;top:497.80px;font-size:23.0px;color:#fff;font-weight:700;transform:translate(0.50px,0) scaleX(0.9937);">State Name</div>
<div class="t" style="left:1170px;top:463.80px;font-size:23.0px;color:#fff;font-weight:700;transform:translate(0.40px,0) scaleX(0.9996);">Number of</div>
<div class="t" style="left:1176px;top:497.80px;font-size:23.0px;color:#fff;font-weight:700;transform:translate(0.57px,0) scaleX(1.0204);">Members</div>
<div class="t" style="left:1359px;top:463.80px;font-size:23.0px;color:#fff;font-weight:700;transform:translate(0.21px,0) scaleX(0.9795);">Actual</div>
<div class="t" style="left:1365px;top:497.80px;font-size:23.0px;color:#fff;font-weight:700;transform:translate(0.76px,0) scaleX(0.9619);">Dues</div>
<div class="t" style="left:1537px;top:463.80px;font-size:23.0px;color:#fff;font-weight:700;transform:translate(0.24px,0) scaleX(0.9758);">Budgeted</div>
<div class="t" style="left:1562px;top:497.80px;font-size:23.0px;color:#fff;font-weight:700;transform:translate(0.27px,0) scaleX(0.9526);">Dues</div>
<div class="t" style="left:1720px;top:463.80px;font-size:23.0px;color:#fff;font-weight:700;transform:translate(0.50px,0) scaleX(0.9730);">Variance</div>
<div class="t" style="left:1756px;top:497.80px;font-size:23.0px;color:#fff;font-weight:700;transform:translate(0.44px,0) scaleX(0.9278);">%</div>
<div class="t" style="left:1887px;top:463.80px;font-size:23.0px;color:#fff;font-weight:700;transform:translate(0.26px,0) scaleX(1.0261);">New</div>
<div class="t" style="left:1860px;top:497.80px;font-size:23.0px;color:#fff;font-weight:700;transform:translate(0.47px,0) scaleX(1.0204);">Members</div>
<div class="t" style="left:2003px;top:463.80px;font-size:23.0px;color:#fff;font-weight:700;transform:translate(0.75px,0) scaleX(1.0355);">New Member</div>
<div class="t" style="left:2047px;top:497.80px;font-size:23.0px;color:#fff;font-weight:700;transform:translate(0.11px,0) scaleX(0.9262);">Target</div>
<div class="t" style="left:2181px;top:463.80px;font-size:23.0px;color:#fff;font-weight:700;transform:translate(0.90px,0) scaleX(0.9708);">Variance</div>
<div class="t" style="left:2217px;top:497.80px;font-size:23.0px;color:#fff;font-weight:700;transform:translate(0.84px,0) scaleX(0.9278);">%</div>
<div class="t" style="left:2324px;top:497.80px;font-size:23.0px;color:#fff;font-weight:700;transform:translate(0.56px,0) scaleX(0.9569);">Drops</div>
<div class="t" style="left:481px;top:533.90px;font-size:22.8px;color:#000;font-weight:700;transform:translate(0.65px,0) scaleX(1.0334);">Midwest</div>
<div class="t" style="left:763px;top:569.55px;font-size:22.5px;color:#0c0c0c;transform:translate(0.17px,0) scaleX(0.9662);-webkit-text-stroke:.22px #0c0c0c;">IA</div>
<div class="t" style="left:869px;top:569.55px;font-size:22.5px;color:#0c0c0c;transform:translate(0.78px,0) scaleX(1.0611);-webkit-text-stroke:.22px #0c0c0c;">Iowa</div>
<div class="t" style="left:1224px;top:569.55px;font-size:22.5px;color:#0c0c0c;transform:translate(0.34px,0) scaleX(1.0450);-webkit-text-stroke:.22px #0c0c0c;">43,158</div>
<div class="t" style="left:1348px;top:569.55px;font-size:22.5px;color:#0c0c0c;transform:translate(0.49px,0) scaleX(1.0450);-webkit-text-stroke:.22px #0c0c0c;">12,947,472</div>
<div class="t" style="left:1570px;top:569.55px;font-size:22.5px;color:#0c0c0c;transform:translate(0.26px,0) scaleX(1.0450);-webkit-text-stroke:.22px #0c0c0c;">13,434,624</div>
<div class="t" style="left:1766px;top:569.55px;font-size:22.5px;color:#0c0c0c;transform:translate(0.12px,0) scaleX(1.0450);-webkit-text-stroke:.22px #0c0c0c;">-3.8%</div>
<div class="t" style="left:1941px;top:569.55px;font-size:22.5px;color:#0c0c0c;transform:translate(0.92px,0) scaleX(1.0450);-webkit-text-stroke:.22px #0c0c0c;">668</div>
<div class="t" style="left:2111px;top:569.55px;font-size:22.5px;color:#0c0c0c;transform:translate(0.23px,0) scaleX(1.0450);-webkit-text-stroke:.22px #0c0c0c;">671</div>
<div class="t" style="left:2226px;top:569.55px;font-size:22.5px;color:#0c0c0c;transform:translate(0.92px,0) scaleX(1.0450);-webkit-text-stroke:.22px #0c0c0c;">-0.5%</div>
<div class="t" style="left:2369px;top:569.55px;font-size:22.5px;color:#0c0c0c;transform:translate(0.32px,0) scaleX(1.0450);-webkit-text-stroke:.22px #0c0c0c;">318</div>
<div class="t" style="left:1318px;top:569.55px;font-size:22.5px;color:#0c0c0c;transform:translate(0.33px,0) scaleX(0.8500);-webkit-text-stroke:.22px #0c0c0c;">$</div>
<div class="t" style="left:1487px;top:569.55px;font-size:22.5px;color:#0c0c0c;transform:translate(0.93px,0) scaleX(0.8500);-webkit-text-stroke:.22px #0c0c0c;">$</div>
<div class="t" style="left:761px;top:604.55px;font-size:22.5px;color:#0c0c0c;transform:translate(0.62px,0) scaleX(0.8196);-webkit-text-stroke:.22px #0c0c0c;">KS</div>
<div class="t" style="left:870px;top:604.55px;font-size:22.5px;color:#0c0c0c;transform:translate(0.17px,0) scaleX(0.9628);-webkit-text-stroke:.22px #0c0c0c;">Kansas</div>
<div class="t" style="left:1224px;top:604.55px;font-size:22.5px;color:#0c0c0c;transform:translate(0.44px,0) scaleX(1.0450);-webkit-text-stroke:.22px #0c0c0c;">93,369</div>
<div class="t" style="left:1347px;top:604.55px;font-size:22.5px;color:#0c0c0c;transform:translate(0.96px,0) scaleX(1.0450);-webkit-text-stroke:.22px #0c0c0c;">28,010,664</div>
<div class="t" style="left:1570px;top:604.55px;font-size:22.5px;color:#0c0c0c;transform:translate(0.58px,0) scaleX(1.0450);-webkit-text-stroke:.22px #0c0c0c;">25,846,128</div>
<div class="t" style="left:1773px;top:604.55px;font-size:22.5px;color:#0c0c0c;transform:translate(0.95px,0) scaleX(1.0450);-webkit-text-stroke:.22px #0c0c0c;">7.7%</div>
<div class="t" style="left:1942px;top:604.55px;font-size:22.5px;color:#0c0c0c;transform:translate(0.03px,0) scaleX(1.0450);-webkit-text-stroke:.22px #0c0c0c;">831</div>
<div class="t" style="left:2110px;top:604.55px;font-size:22.5px;color:#0c0c0c;transform:translate(0.81px,0) scaleX(1.0450);-webkit-text-stroke:.22px #0c0c0c;">844</div>
<div class="t" style="left:2226px;top:604.55px;font-size:22.5px;color:#0c0c0c;transform:translate(0.92px,0) scaleX(1.0450);-webkit-text-stroke:.22px #0c0c0c;">-1.5%</div>
<div class="t" style="left:2369px;top:604.55px;font-size:22.5px;color:#0c0c0c;transform:translate(0.53px,0) scaleX(1.0450);-webkit-text-stroke:.22px #0c0c0c;">692</div>
<div class="t" style="left:1318px;top:604.55px;font-size:22.5px;color:#0c0c0c;transform:translate(0.33px,0) scaleX(0.8500);-webkit-text-stroke:.22px #0c0c0c;">$</div>
<div class="t" style="left:1487px;top:604.55px;font-size:22.5px;color:#0c0c0c;transform:translate(0.93px,0) scaleX(0.8500);-webkit-text-stroke:.22px #0c0c0c;">$</div>
<div class="t" style="left:758px;top:639.55px;font-size:22.5px;color:#0c0c0c;transform:translate(0.93px,0) scaleX(1.2061);-webkit-text-stroke:.22px #0c0c0c;">MI</div>
<div class="t" style="left:869px;top:639.55px;font-size:22.5px;color:#0c0c0c;transform:translate(0.95px,0) scaleX(1.0814);-webkit-text-stroke:.22px #0c0c0c;">Michigan</div>
<div class="t" style="left:1224px;top:639.55px;font-size:22.5px;color:#0c0c0c;transform:translate(0.34px,0) scaleX(1.0450);-webkit-text-stroke:.22px #0c0c0c;">10,783</div>
<div class="t" style="left:1361px;top:639.55px;font-size:22.5px;color:#0c0c0c;transform:translate(0.35px,0) scaleX(1.0450);-webkit-text-stroke:.22px #0c0c0c;">3,234,816</div>
<div class="t" style="left:1583px;top:639.55px;font-size:22.5px;color:#0c0c0c;transform:translate(0.34px,0) scaleX(1.0450);-webkit-text-stroke:.22px #0c0c0c;">2,870,784</div>
<div class="t" style="left:1762px;top:639.55px;font-size:22.5px;color:#0c0c0c;transform:translate(0.61px,0) scaleX(1.0450);-webkit-text-stroke:.22px #0c0c0c;">11.3%</div>
<div class="t" style="left:1955px;top:639.55px;font-size:22.5px;color:#0c0c0c;transform:translate(0.00px,0) scaleX(1.0450);-webkit-text-stroke:.22px #0c0c0c;">93</div>
<div class="t" style="left:2124px;top:639.55px;font-size:22.5px;color:#0c0c0c;transform:translate(0.20px,0) scaleX(1.0450);-webkit-text-stroke:.22px #0c0c0c;">95</div>
<div class="t" style="left:2226px;top:639.55px;font-size:22.5px;color:#0c0c0c;transform:translate(0.92px,0) scaleX(1.0450);-webkit-text-stroke:.22px #0c0c0c;">-1.7%</div>
<div class="t" style="left:2369px;top:639.55px;font-size:22.5px;color:#0c0c0c;transform:translate(0.53px,0) scaleX(1.0450);-webkit-text-stroke:.22px #0c0c0c;">242</div>
<div class="t" style="left:1318px;top:639.55px;font-size:22.5px;color:#0c0c0c;transform:translate(0.33px,0) scaleX(0.8500);-webkit-text-stroke:.22px #0c0c0c;">$</div>
<div class="t" style="left:1487px;top:639.55px;font-size:22.5px;color:#0c0c0c;transform:translate(0.93px,0) scaleX(0.8500);-webkit-text-stroke:.22px #0c0c0c;">$</div>
<div class="t" style="left:754px;top:674.55px;font-size:22.5px;color:#0c0c0c;transform:translate(0.48px,0) scaleX(1.1195);-webkit-text-stroke:.22px #0c0c0c;">MN</div>
<div class="t" style="left:869px;top:674.55px;font-size:22.5px;color:#0c0c0c;transform:translate(0.96px,0) scaleX(1.0804);-webkit-text-stroke:.22px #0c0c0c;">Minnesota</div>
<div class="t" style="left:1224px;top:674.55px;font-size:22.5px;color:#0c0c0c;transform:translate(0.55px,0) scaleX(1.0450);-webkit-text-stroke:.22px #0c0c0c;">21,242</div>
<div class="t" style="left:1361px;top:674.55px;font-size:22.5px;color:#0c0c0c;transform:translate(0.56px,0) scaleX(1.0450);-webkit-text-stroke:.22px #0c0c0c;">6,372,432</div>
<div class="t" style="left:1583px;top:674.55px;font-size:22.5px;color:#0c0c0c;transform:translate(0.55px,0) scaleX(1.0450);-webkit-text-stroke:.22px #0c0c0c;">5,326,560</div>
<div class="t" style="left:1760px;top:674.55px;font-size:22.5px;color:#0c0c0c;transform:translate(0.87px,0) scaleX(1.0450);-webkit-text-stroke:.22px #0c0c0c;">16.4%</div>
<div class="t" style="left:1942px;top:674.55px;font-size:22.5px;color:#0c0c0c;transform:translate(0.03px,0) scaleX(1.0450);-webkit-text-stroke:.22px #0c0c0c;">541</div>
<div class="t" style="left:2111px;top:674.55px;font-size:22.5px;color:#0c0c0c;transform:translate(0.33px,0) scaleX(1.0450);-webkit-text-stroke:.22px #0c0c0c;">552</div>
<div class="t" style="left:2226px;top:674.55px;font-size:22.5px;color:#0c0c0c;transform:translate(0.92px,0) scaleX(1.0450);-webkit-text-stroke:.22px #0c0c0c;">-2.1%</div>
<div class="t" style="left:2369px;top:674.55px;font-size:22.5px;color:#0c0c0c;transform:translate(0.53px,0) scaleX(1.0450);-webkit-text-stroke:.22px #0c0c0c;">477</div>
<div class="t" style="left:1318px;top:674.55px;font-size:22.5px;color:#0c0c0c;transform:translate(0.33px,0) scaleX(0.8500);-webkit-text-stroke:.22px #0c0c0c;">$</div>
<div class="t" style="left:1487px;top:674.55px;font-size:22.5px;color:#0c0c0c;transform:translate(0.93px,0) scaleX(0.8500);-webkit-text-stroke:.22px #0c0c0c;">$</div>
<div class="t" style="left:757px;top:709.55px;font-size:22.5px;color:#0c0c0c;transform:translate(0.37px,0) scaleX(1.0152);-webkit-text-stroke:.22px #0c0c0c;">ND</div>
<div class="t" style="left:869px;top:709.55px;font-size:22.5px;color:#0c0c0c;transform:translate(0.99px,0) scaleX(1.0600);-webkit-text-stroke:.22px #0c0c0c;">North Dakota</div>
<div class="t" style="left:1224px;top:709.55px;font-size:22.5px;color:#0c0c0c;transform:translate(0.34px,0) scaleX(1.0450);-webkit-text-stroke:.22px #0c0c0c;">23,078</div>
<div class="t" style="left:1361px;top:709.55px;font-size:22.5px;color:#0c0c0c;transform:translate(0.56px,0) scaleX(1.0450);-webkit-text-stroke:.22px #0c0c0c;">6,923,347</div>
<div class="t" style="left:1583px;top:709.55px;font-size:22.5px;color:#0c0c0c;transform:translate(0.34px,0) scaleX(1.0450);-webkit-text-stroke:.22px #0c0c0c;">9,836,064</div>
<div class="t" style="left:1753px;top:709.55px;font-size:22.5px;color:#0c0c0c;transform:translate(0.04px,0) scaleX(1.0450);-webkit-text-stroke:.22px #0c0c0c;">-42.1%</div>
<div class="t" style="left:1942px;top:709.55px;font-size:22.5px;color:#0c0c0c;transform:translate(0.03px,0) scaleX(1.0450);-webkit-text-stroke:.22px #0c0c0c;">681</div>
<div class="t" style="left:2111px;top:709.55px;font-size:22.5px;color:#0c0c0c;transform:translate(0.12px,0) scaleX(1.0450);-webkit-text-stroke:.22px #0c0c0c;">693</div>
<div class="t" style="left:2226px;top:709.55px;font-size:22.5px;color:#0c0c0c;transform:translate(0.92px,0) scaleX(1.0450);-webkit-text-stroke:.22px #0c0c0c;">-1.7%</div>
<div class="t" style="left:2369px;top:709.55px;font-size:22.5px;color:#0c0c0c;transform:translate(0.43px,0) scaleX(1.0450);-webkit-text-stroke:.22px #0c0c0c;">519</div>
<div class="t" style="left:1318px;top:709.55px;font-size:22.5px;color:#0c0c0c;transform:translate(0.33px,0) scaleX(0.8500);-webkit-text-stroke:.22px #0c0c0c;">$</div>
<div class="t" style="left:1487px;top:709.55px;font-size:22.5px;color:#0c0c0c;transform:translate(0.93px,0) scaleX(0.8500);-webkit-text-stroke:.22px #0c0c0c;">$</div>
<div class="t" style="left:757px;top:744.55px;font-size:22.5px;color:#0c0c0c;transform:translate(0.40px,0) scaleX(0.9967);-webkit-text-stroke:.22px #0c0c0c;">OH</div>
<div class="t" style="left:870px;top:744.55px;font-size:22.5px;color:#0c0c0c;transform:translate(0.84px,0) scaleX(1.0611);-webkit-text-stroke:.22px #0c0c0c;">Ohio</div>
<div class="t" style="left:1224px;top:744.55px;font-size:22.5px;color:#0c0c0c;transform:translate(0.23px,0) scaleX(1.0450);-webkit-text-stroke:.22px #0c0c0c;">24,800</div>
<div class="t" style="left:1361px;top:744.55px;font-size:22.5px;color:#0c0c0c;transform:translate(0.25px,0) scaleX(1.0450);-webkit-text-stroke:.22px #0c0c0c;">7,440,120</div>
<div class="t" style="left:1583px;top:744.55px;font-size:22.5px;color:#0c0c0c;transform:translate(0.55px,0) scaleX(1.0450);-webkit-text-stroke:.22px #0c0c0c;">8,588,160</div>
<div class="t" style="left:1753px;top:744.55px;font-size:22.5px;color:#0c0c0c;transform:translate(0.04px,0) scaleX(1.0450);-webkit-text-stroke:.22px #0c0c0c;">-15.4%</div>
<div class="t" style="left:1941px;top:744.55px;font-size:22.5px;color:#0c0c0c;transform:translate(0.92px,0) scaleX(1.0450);-webkit-text-stroke:.22px #0c0c0c;">516</div>
<div class="t" style="left:2111px;top:744.55px;font-size:22.5px;color:#0c0c0c;transform:translate(0.12px,0) scaleX(1.0450);-webkit-text-stroke:.22px #0c0c0c;">518</div>
<div class="t" style="left:2226px;top:744.55px;font-size:22.5px;color:#0c0c0c;transform:translate(0.92px,0) scaleX(1.0450);-webkit-text-stroke:.22px #0c0c0c;">-0.4%</div>
<div class="t" style="left:2369px;top:744.55px;font-size:22.5px;color:#0c0c0c;transform:translate(0.32px,0) scaleX(1.0450);-webkit-text-stroke:.22px #0c0c0c;">548</div>
<div class="t" style="left:1318px;top:744.55px;font-size:22.5px;color:#0c0c0c;transform:translate(0.33px,0) scaleX(0.8500);-webkit-text-stroke:.22px #0c0c0c;">$</div>
<div class="t" style="left:1487px;top:744.55px;font-size:22.5px;color:#0c0c0c;transform:translate(0.93px,0) scaleX(0.8500);-webkit-text-stroke:.22px #0c0c0c;">$</div>
<div class="t" style="left:871px;top:779.90px;font-size:22.8px;color:#0b670b;font-weight:700;transform:translate(0.32px,0) scaleX(0.9675);">Sub-Total</div>
<div class="t" style="left:1211px;top:779.90px;font-size:22.8px;color:#0b670b;font-weight:700;transform:translate(0.32px,0) scaleX(1.0300);">216,430</div>
<div class="t" style="left:1348px;top:779.90px;font-size:22.8px;color:#0b670b;font-weight:700;transform:translate(0.06px,0) scaleX(1.0300);">64,928,851</div>
<div class="t" style="left:1570px;top:779.90px;font-size:22.8px;color:#0b670b;font-weight:700;transform:translate(0.67px,0) scaleX(1.0300);">65,902,320</div>
<div class="t" style="left:1766px;top:779.90px;font-size:22.8px;color:#0b670b;font-weight:700;transform:translate(0.04px,0) scaleX(1.0300);">-1.5%</div>
<div class="t" style="left:1922px;top:779.90px;font-size:22.8px;color:#0b670b;font-weight:700;transform:translate(0.34px,0) scaleX(1.0300);">3,330</div>
<div class="t" style="left:2091px;top:779.90px;font-size:22.8px;color:#0b670b;font-weight:700;transform:translate(0.44px,0) scaleX(1.0300);">3,373</div>
<div class="t" style="left:2226px;top:779.90px;font-size:22.8px;color:#0b670b;font-weight:700;transform:translate(0.84px,0) scaleX(1.0300);">-1.3%</div>
<div class="t" style="left:2349px;top:779.90px;font-size:22.8px;color:#0b670b;font-weight:700;transform:translate(0.43px,0) scaleX(1.0300);">2,795</div>
<div class="t" style="left:1318px;top:779.90px;font-size:22.8px;color:#0b670b;font-weight:700;transform:translate(0.25px,0) scaleX(0.8430);">$</div>
<div class="t" style="left:1487px;top:779.90px;font-size:22.8px;color:#0b670b;font-weight:700;transform:translate(0.85px,0) scaleX(0.8430);">$</div>
<div class="t" style="left:481px;top:814.90px;font-size:22.8px;color:#000;font-weight:700;transform:translate(0.70px,0) scaleX(1.0017);">Northeast</div>
<div class="t" style="left:760px;top:850.55px;font-size:22.5px;color:#0c0c0c;transform:translate(0.16px,0) scaleX(0.8542);-webkit-text-stroke:.22px #0c0c0c;">CT</div>
<div class="t" style="left:870px;top:850.55px;font-size:22.5px;color:#0c0c0c;transform:translate(0.74px,0) scaleX(1.0539);-webkit-text-stroke:.22px #0c0c0c;">Connecticut</div>
<div class="t" style="left:1224px;top:850.55px;font-size:22.5px;color:#0c0c0c;transform:translate(0.55px,0) scaleX(1.0450);-webkit-text-stroke:.22px #0c0c0c;">13,682</div>
<div class="t" style="left:1361px;top:850.55px;font-size:22.5px;color:#0c0c0c;transform:translate(0.04px,0) scaleX(1.0450);-webkit-text-stroke:.22px #0c0c0c;">4,104,684</div>
<div class="t" style="left:1583px;top:850.55px;font-size:22.5px;color:#0c0c0c;transform:translate(0.55px,0) scaleX(1.0450);-webkit-text-stroke:.22px #0c0c0c;">4,418,640</div>
<div class="t" style="left:1766px;top:850.55px;font-size:22.5px;color:#0c0c0c;transform:translate(0.12px,0) scaleX(1.0450);-webkit-text-stroke:.22px #0c0c0c;">-7.6%</div>
<div class="t" style="left:1941px;top:850.55px;font-size:22.5px;color:#0c0c0c;transform:translate(0.92px,0) scaleX(1.0450);-webkit-text-stroke:.22px #0c0c0c;">643</div>
<div class="t" style="left:2111px;top:850.55px;font-size:22.5px;color:#0c0c0c;transform:translate(0.23px,0) scaleX(1.0450);-webkit-text-stroke:.22px #0c0c0c;">569</div>
<div class="t" style="left:2223px;top:850.55px;font-size:22.5px;color:#0c0c0c;transform:translate(0.41px,0) scaleX(1.0450);-webkit-text-stroke:.22px #0c0c0c;">11.5%</div>
<div class="t" style="left:2382px;top:850.55px;font-size:22.5px;color:#0c0c0c;transform:translate(0.40px,0) scaleX(1.0450);-webkit-text-stroke:.22px #0c0c0c;">85</div>
<div class="t" style="left:1318px;top:850.55px;font-size:22.5px;color:#0c0c0c;transform:translate(0.33px,0) scaleX(0.8500);-webkit-text-stroke:.22px #0c0c0c;">$</div>
<div class="t" style="left:1487px;top:850.55px;font-size:22.5px;color:#0c0c0c;transform:translate(0.93px,0) scaleX(0.8500);-webkit-text-stroke:.22px #0c0c0c;">$</div>
<div class="t" style="left:757px;top:885.55px;font-size:22.5px;color:#0c0c0c;transform:translate(0.33px,0) scaleX(1.0398);-webkit-text-stroke:.22px #0c0c0c;">NH</div>
<div class="t" style="left:870px;top:885.55px;font-size:22.5px;color:#0c0c0c;transform:translate(0.00px,0) scaleX(1.0551);-webkit-text-stroke:.22px #0c0c0c;">New Hampshire</div>
<div class="t" style="left:1237px;top:885.55px;font-size:22.5px;color:#0c0c0c;transform:translate(0.62px,0) scaleX(1.0450);-webkit-text-stroke:.22px #0c0c0c;">7,217</div>
<div class="t" style="left:1361px;top:885.55px;font-size:22.5px;color:#0c0c0c;transform:translate(0.25px,0) scaleX(1.0450);-webkit-text-stroke:.22px #0c0c0c;">2,165,040</div>
<div class="t" style="left:1583px;top:885.55px;font-size:22.5px;color:#0c0c0c;transform:translate(0.55px,0) scaleX(1.0450);-webkit-text-stroke:.22px #0c0c0c;">2,371,500</div>
<div class="t" style="left:1766px;top:885.55px;font-size:22.5px;color:#0c0c0c;transform:translate(0.12px,0) scaleX(1.0450);-webkit-text-stroke:.22px #0c0c0c;">-9.5%</div>
<div class="t" style="left:1941px;top:885.55px;font-size:22.5px;color:#0c0c0c;transform:translate(0.82px,0) scaleX(1.0450);-webkit-text-stroke:.22px #0c0c0c;">550</div>
<div class="t" style="left:2111px;top:885.55px;font-size:22.5px;color:#0c0c0c;transform:translate(0.02px,0) scaleX(1.0450);-webkit-text-stroke:.22px #0c0c0c;">490</div>
<div class="t" style="left:2221px;top:885.55px;font-size:22.5px;color:#0c0c0c;transform:translate(0.67px,0) scaleX(1.0450);-webkit-text-stroke:.22px #0c0c0c;">10.9%</div>
<div class="t" style="left:2382px;top:885.55px;font-size:22.5px;color:#0c0c0c;transform:translate(0.40px,0) scaleX(1.0450);-webkit-text-stroke:.22px #0c0c0c;">45</div>
<div class="t" style="left:1318px;top:885.55px;font-size:22.5px;color:#0c0c0c;transform:translate(0.33px,0) scaleX(0.8500);-webkit-text-stroke:.22px #0c0c0c;">$</div>
<div class="t" style="left:1487px;top:885.55px;font-size:22.5px;color:#0c0c0c;transform:translate(0.93px,0) scaleX(0.8500);-webkit-text-stroke:.22px #0c0c0c;">$</div>
<div class="t" style="left:760px;top:920.55px;font-size:22.5px;color:#0c0c0c;transform:translate(0.71px,0) scaleX(0.8855);-webkit-text-stroke:.22px #0c0c0c;">PA</div>
<div class="t" style="left:870px;top:920.55px;font-size:22.5px;color:#0c0c0c;transform:translate(0.09px,0) scaleX(1.0059);-webkit-text-stroke:.22px #0c0c0c;">Pennsylvania</div>
<div class="t" style="left:1226px;top:920.55px;font-size:22.5px;color:#0c0c0c;transform:translate(0.08px,0) scaleX(1.0450);-webkit-text-stroke:.22px #0c0c0c;">11,566</div>
<div class="t" style="left:1361px;top:920.55px;font-size:22.5px;color:#0c0c0c;transform:translate(0.25px,0) scaleX(1.0450);-webkit-text-stroke:.22px #0c0c0c;">3,469,860</div>
<div class="t" style="left:1583px;top:920.55px;font-size:22.5px;color:#0c0c0c;transform:translate(0.55px,0) scaleX(1.0450);-webkit-text-stroke:.22px #0c0c0c;">1,849,500</div>
<div class="t" style="left:1760px;top:920.55px;font-size:22.5px;color:#0c0c0c;transform:translate(0.87px,0) scaleX(1.0450);-webkit-text-stroke:.22px #0c0c0c;">46.7%</div>
<div class="t" style="left:1942px;top:920.55px;font-size:22.5px;color:#0c0c0c;transform:translate(0.03px,0) scaleX(1.0450);-webkit-text-stroke:.22px #0c0c0c;">419</div>
<div class="t" style="left:2111px;top:920.55px;font-size:22.5px;color:#0c0c0c;transform:translate(0.33px,0) scaleX(1.0450);-webkit-text-stroke:.22px #0c0c0c;">372</div>
<div class="t" style="left:2223px;top:920.55px;font-size:22.5px;color:#0c0c0c;transform:translate(0.41px,0) scaleX(1.0450);-webkit-text-stroke:.22px #0c0c0c;">11.2%</div>
<div class="t" style="left:2382px;top:920.55px;font-size:22.5px;color:#0c0c0c;transform:translate(0.61px,0) scaleX(1.0450);-webkit-text-stroke:.22px #0c0c0c;">72</div>
<div class="t" style="left:1318px;top:920.55px;font-size:22.5px;color:#0c0c0c;transform:translate(0.33px,0) scaleX(0.8500);-webkit-text-stroke:.22px #0c0c0c;">$</div>
<div class="t" style="left:1487px;top:920.55px;font-size:22.5px;color:#0c0c0c;transform:translate(0.93px,0) scaleX(0.8500);-webkit-text-stroke:.22px #0c0c0c;">$</div>
<div class="t" style="left:871px;top:954.90px;font-size:22.8px;color:#0b670b;font-weight:700;transform:translate(0.32px,0) scaleX(0.9675);">Sub-Total</div>
<div class="t" style="left:1224px;top:954.90px;font-size:22.8px;color:#0b670b;font-weight:700;transform:translate(0.07px,0) scaleX(1.0300);">32,465</div>
<div class="t" style="left:1360px;top:954.90px;font-size:22.8px;color:#0b670b;font-weight:700;transform:translate(0.61px,0) scaleX(1.0300);">9,739,584</div>
<div class="t" style="left:1583px;top:954.90px;font-size:22.8px;color:#0b670b;font-weight:700;transform:translate(0.73px,0) scaleX(1.0300);">8,639,640</div>
<div class="t" style="left:1762px;top:954.90px;font-size:22.8px;color:#0b670b;font-weight:700;transform:translate(0.10px,0) scaleX(1.0300);">11.3%</div>
<div class="t" style="left:1922px;top:954.90px;font-size:22.8px;color:#0b670b;font-weight:700;transform:translate(0.34px,0) scaleX(1.0300);">1,612</div>
<div class="t" style="left:2091px;top:954.90px;font-size:22.8px;color:#0b670b;font-weight:700;transform:translate(0.23px,0) scaleX(1.0300);">1,431</div>
<div class="t" style="left:2222px;top:954.90px;font-size:22.8px;color:#0b670b;font-weight:700;transform:translate(0.90px,0) scaleX(1.0300);">11.2%</div>
<div class="t" style="left:2369px;top:954.90px;font-size:22.8px;color:#0b670b;font-weight:700;transform:translate(0.32px,0) scaleX(1.0300);">202</div>
<div class="t" style="left:1318px;top:954.90px;font-size:22.8px;color:#0b670b;font-weight:700;transform:translate(0.25px,0) scaleX(0.8430);">$</div>
<div class="t" style="left:1487px;top:954.90px;font-size:22.8px;color:#0b670b;font-weight:700;transform:translate(0.85px,0) scaleX(0.8430);">$</div>
<div class="t" style="left:871px;top:989.90px;font-size:22.8px;color:#0b670b;font-weight:700;transform:translate(0.32px,0) scaleX(0.9675);">Sub-Total</div>
<div class="t" style="left:1211px;top:989.90px;font-size:22.8px;color:#0b670b;font-weight:700;transform:translate(0.21px,0) scaleX(1.0300);">234,786</div>
<div class="t" style="left:1348px;top:989.90px;font-size:22.8px;color:#0b670b;font-weight:700;transform:translate(0.06px,0) scaleX(1.0300);">70,435,665</div>
<div class="t" style="left:1570px;top:989.90px;font-size:22.8px;color:#0b670b;font-weight:700;transform:translate(0.47px,0) scaleX(1.0300);">66,374,928</div>
<div class="t" style="left:1773px;top:989.90px;font-size:22.8px;color:#0b670b;font-weight:700;transform:translate(0.86px,0) scaleX(1.0300);">5.8%</div>
<div class="t" style="left:1922px;top:989.90px;font-size:22.8px;color:#0b670b;font-weight:700;transform:translate(0.44px,0) scaleX(1.0300);">2,467</div>
<div class="t" style="left:2091px;top:989.90px;font-size:22.8px;color:#0b670b;font-weight:700;transform:translate(0.64px,0) scaleX(1.0300);">2,177</div>
<div class="t" style="left:2222px;top:989.90px;font-size:22.8px;color:#0b670b;font-weight:700;transform:translate(0.90px,0) scaleX(1.0300);">11.7%</div>
<div class="t" style="left:2349px;top:989.90px;font-size:22.8px;color:#0b670b;font-weight:700;transform:translate(0.43px,0) scaleX(1.0300);">3,665</div>
<div class="t" style="left:1318px;top:989.90px;font-size:22.8px;color:#0b670b;font-weight:700;transform:translate(0.25px,0) scaleX(0.8430);">$</div>
<div class="t" style="left:1487px;top:989.90px;font-size:22.8px;color:#0b670b;font-weight:700;transform:translate(0.85px,0) scaleX(0.8430);">$</div>
<div class="t" style="left:871px;top:1025.90px;font-size:22.8px;color:#0b670b;font-weight:700;transform:translate(0.32px,0) scaleX(0.9675);">Sub-Total</div>
<div class="t" style="left:1224px;top:1025.90px;font-size:22.8px;color:#0b670b;font-weight:700;transform:translate(0.07px,0) scaleX(1.0300);">38,235</div>
<div class="t" style="left:1349px;top:1025.90px;font-size:22.8px;color:#0b670b;font-weight:700;transform:translate(0.67px,0) scaleX(1.0300);">11,470,392</div>
<div class="t" style="left:1571px;top:1025.90px;font-size:22.8px;color:#0b670b;font-weight:700;transform:translate(0.97px,0) scaleX(1.0300);">11,502,720</div>
<div class="t" style="left:1766px;top:1025.90px;font-size:22.8px;color:#0b670b;font-weight:700;transform:translate(0.04px,0) scaleX(1.0300);">-0.3%</div>
<div class="t" style="left:1922px;top:1025.90px;font-size:22.8px;color:#0b670b;font-weight:700;transform:translate(0.03px,0) scaleX(1.0300);">1,151</div>
<div class="t" style="left:2091px;top:1025.90px;font-size:22.8px;color:#0b670b;font-weight:700;transform:translate(0.23px,0) scaleX(1.0300);">1,175</div>
<div class="t" style="left:2226px;top:1025.90px;font-size:22.8px;color:#0b670b;font-weight:700;transform:translate(0.84px,0) scaleX(1.0300);">-2.0%</div>
<div class="t" style="left:2369px;top:1025.90px;font-size:22.8px;color:#0b670b;font-weight:700;transform:translate(0.22px,0) scaleX(1.0300);">859</div>
<div class="t" style="left:1318px;top:1025.90px;font-size:22.8px;color:#0b670b;font-weight:700;transform:translate(0.25px,0) scaleX(0.8430);">$</div>
<div class="t" style="left:1487px;top:1025.90px;font-size:22.8px;color:#0b670b;font-weight:700;transform:translate(0.85px,0) scaleX(0.8430);">$</div>
<div class="t" style="left:483px;top:1060.90px;font-size:22.8px;color:#000;font-weight:700;transform:translate(0.20px,0) scaleX(0.9709);">West</div>
<div class="t" style="left:759px;top:1096.55px;font-size:22.5px;color:#0c0c0c;transform:translate(0.63px,0) scaleX(0.8790);-webkit-text-stroke:.22px #0c0c0c;">CA</div>
<div class="t" style="left:870px;top:1096.55px;font-size:22.5px;color:#0c0c0c;transform:translate(0.76px,0) scaleX(1.0369);-webkit-text-stroke:.22px #0c0c0c;">California</div>
<div class="t" style="left:1226px;top:1096.55px;font-size:22.5px;color:#0c0c0c;transform:translate(0.29px,0) scaleX(1.0450);-webkit-text-stroke:.22px #0c0c0c;">11,652</div>
<div class="t" style="left:1361px;top:1096.55px;font-size:22.5px;color:#0c0c0c;transform:translate(0.04px,0) scaleX(1.0450);-webkit-text-stroke:.22px #0c0c0c;">3,495,744</div>
<div class="t" style="left:1583px;top:1096.55px;font-size:22.5px;color:#0c0c0c;transform:translate(0.65px,0) scaleX(1.0450);-webkit-text-stroke:.22px #0c0c0c;">3,973,536</div>
<div class="t" style="left:1753px;top:1096.55px;font-size:22.5px;color:#0c0c0c;transform:translate(0.04px,0) scaleX(1.0450);-webkit-text-stroke:.22px #0c0c0c;">-13.7%</div>
<div class="t" style="left:1942px;top:1096.55px;font-size:22.5px;color:#0c0c0c;transform:translate(0.13px,0) scaleX(1.0450);-webkit-text-stroke:.22px #0c0c0c;">652</div>
<div class="t" style="left:2111px;top:1096.55px;font-size:22.5px;color:#0c0c0c;transform:translate(0.12px,0) scaleX(1.0450);-webkit-text-stroke:.22px #0c0c0c;">655</div>
<div class="t" style="left:2226px;top:1096.55px;font-size:22.5px;color:#0c0c0c;transform:translate(0.92px,0) scaleX(1.0450);-webkit-text-stroke:.22px #0c0c0c;">-0.5%</div>
<div class="t" style="left:2369px;top:1096.55px;font-size:22.5px;color:#0c0c0c;transform:translate(0.32px,0) scaleX(1.0450);-webkit-text-stroke:.22px #0c0c0c;">258</div>
<div class="t" style="left:1318px;top:1096.55px;font-size:22.5px;color:#0c0c0c;transform:translate(0.33px,0) scaleX(0.8500);-webkit-text-stroke:.22px #0c0c0c;">$</div>
<div class="t" style="left:1487px;top:1096.55px;font-size:22.5px;color:#0c0c0c;transform:translate(0.93px,0) scaleX(0.8500);-webkit-text-stroke:.22px #0c0c0c;">$</div>
<div class="t" style="left:758px;top:1131.55px;font-size:22.5px;color:#0c0c0c;transform:translate(0.49px,0) scaleX(0.9163);-webkit-text-stroke:.22px #0c0c0c;">CO</div>
<div class="t" style="left:870px;top:1131.55px;font-size:22.5px;color:#0c0c0c;transform:translate(0.75px,0) scaleX(1.0415);-webkit-text-stroke:.22px #0c0c0c;">Colorado</div>
<div class="t" style="left:1224px;top:1131.55px;font-size:22.5px;color:#0c0c0c;transform:translate(0.55px,0) scaleX(1.0450);-webkit-text-stroke:.22px #0c0c0c;">97,012</div>
<div class="t" style="left:1348px;top:1131.55px;font-size:22.5px;color:#0c0c0c;transform:translate(0.17px,0) scaleX(1.0450);-webkit-text-stroke:.22px #0c0c0c;">29,103,480</div>
<div class="t" style="left:1570px;top:1131.55px;font-size:22.5px;color:#0c0c0c;transform:translate(0.47px,0) scaleX(1.0450);-webkit-text-stroke:.22px #0c0c0c;">26,913,600</div>
<div class="t" style="left:1773px;top:1131.55px;font-size:22.5px;color:#0c0c0c;transform:translate(0.95px,0) scaleX(1.0450);-webkit-text-stroke:.22px #0c0c0c;">7.5%</div>
<div class="t" style="left:1942px;top:1131.55px;font-size:22.5px;color:#0c0c0c;transform:translate(0.13px,0) scaleX(1.0450);-webkit-text-stroke:.22px #0c0c0c;">562</div>
<div class="t" style="left:2110px;top:1131.55px;font-size:22.5px;color:#0c0c0c;transform:translate(0.81px,0) scaleX(1.0450);-webkit-text-stroke:.22px #0c0c0c;">574</div>
<div class="t" style="left:2226px;top:1131.55px;font-size:22.5px;color:#0c0c0c;transform:translate(0.92px,0) scaleX(1.0450);-webkit-text-stroke:.22px #0c0c0c;">-2.2%</div>
<div class="t" style="left:2369px;top:1131.55px;font-size:22.5px;color:#0c0c0c;transform:translate(0.53px,0) scaleX(1.0450);-webkit-text-stroke:.22px #0c0c0c;">727</div>
<div class="t" style="left:1318px;top:1131.55px;font-size:22.5px;color:#0c0c0c;transform:translate(0.33px,0) scaleX(0.8500);-webkit-text-stroke:.22px #0c0c0c;">$</div>
<div class="t" style="left:1487px;top:1131.55px;font-size:22.5px;color:#0c0c0c;transform:translate(0.93px,0) scaleX(0.8500);-webkit-text-stroke:.22px #0c0c0c;">$</div>
<div class="t" style="left:758px;top:1166.55px;font-size:22.5px;color:#0c0c0c;transform:translate(0.58px,0) scaleX(0.9576);-webkit-text-stroke:.22px #0c0c0c;">NV</div>
<div class="t" style="left:870px;top:1166.55px;font-size:22.5px;color:#0c0c0c;transform:translate(0.08px,0) scaleX(1.0087);-webkit-text-stroke:.22px #0c0c0c;">Nevada</div>
<div class="t" style="left:1224px;top:1166.55px;font-size:22.5px;color:#0c0c0c;transform:translate(0.23px,0) scaleX(1.0450);-webkit-text-stroke:.22px #0c0c0c;">18,990</div>
<div class="t" style="left:1361px;top:1166.55px;font-size:22.5px;color:#0c0c0c;transform:translate(0.25px,0) scaleX(1.0450);-webkit-text-stroke:.22px #0c0c0c;">5,697,000</div>
<div class="t" style="left:1583px;top:1166.55px;font-size:22.5px;color:#0c0c0c;transform:translate(0.55px,0) scaleX(1.0450);-webkit-text-stroke:.22px #0c0c0c;">4,077,000</div>
<div class="t" style="left:1760px;top:1166.55px;font-size:22.5px;color:#0c0c0c;transform:translate(0.87px,0) scaleX(1.0450);-webkit-text-stroke:.22px #0c0c0c;">28.4%</div>
<div class="t" style="left:1943px;top:1166.55px;font-size:22.5px;color:#0c0c0c;transform:translate(0.77px,0) scaleX(1.0450);-webkit-text-stroke:.22px #0c0c0c;">811</div>
<div class="t" style="left:2111px;top:1166.55px;font-size:22.5px;color:#0c0c0c;transform:translate(0.12px,0) scaleX(1.0450);-webkit-text-stroke:.22px #0c0c0c;">823</div>
<div class="t" style="left:2226px;top:1166.55px;font-size:22.5px;color:#0c0c0c;transform:translate(0.92px,0) scaleX(1.0450);-webkit-text-stroke:.22px #0c0c0c;">-1.5%</div>
<div class="t" style="left:2369px;top:1166.55px;font-size:22.5px;color:#0c0c0c;transform:translate(0.01px,0) scaleX(1.0450);-webkit-text-stroke:.22px #0c0c0c;">424</div>
<div class="t" style="left:1318px;top:1166.55px;font-size:22.5px;color:#0c0c0c;transform:translate(0.33px,0) scaleX(0.8500);-webkit-text-stroke:.22px #0c0c0c;">$</div>
<div class="t" style="left:1487px;top:1166.55px;font-size:22.5px;color:#0c0c0c;transform:translate(0.93px,0) scaleX(0.8500);-webkit-text-stroke:.22px #0c0c0c;">$</div>
<div class="t" style="left:758px;top:1201.55px;font-size:22.5px;color:#0c0c0c;transform:translate(0.59px,0) scaleX(0.9119);-webkit-text-stroke:.22px #0c0c0c;">OR</div>
<div class="t" style="left:870px;top:1201.55px;font-size:22.5px;color:#0c0c0c;transform:translate(0.86px,0) scaleX(1.0436);-webkit-text-stroke:.22px #0c0c0c;">Oregon</div>
<div class="t" style="left:1237px;top:1201.55px;font-size:22.5px;color:#0c0c0c;transform:translate(0.52px,0) scaleX(1.0450);-webkit-text-stroke:.22px #0c0c0c;">9,949</div>
<div class="t" style="left:1361px;top:1201.55px;font-size:22.5px;color:#0c0c0c;transform:translate(0.25px,0) scaleX(1.0450);-webkit-text-stroke:.22px #0c0c0c;">2,984,580</div>
<div class="t" style="left:1583px;top:1201.55px;font-size:22.5px;color:#0c0c0c;transform:translate(0.55px,0) scaleX(1.0450);-webkit-text-stroke:.22px #0c0c0c;">2,238,840</div>
<div class="t" style="left:1760px;top:1201.55px;font-size:22.5px;color:#0c0c0c;transform:translate(0.87px,0) scaleX(1.0450);-webkit-text-stroke:.22px #0c0c0c;">25.0%</div>
<div class="t" style="left:1942px;top:1201.55px;font-size:22.5px;color:#0c0c0c;transform:translate(0.03px,0) scaleX(1.0450);-webkit-text-stroke:.22px #0c0c0c;">681</div>
<div class="t" style="left:2111px;top:1201.55px;font-size:22.5px;color:#0c0c0c;transform:translate(0.12px,0) scaleX(1.0450);-webkit-text-stroke:.22px #0c0c0c;">693</div>
<div class="t" style="left:2226px;top:1201.55px;font-size:22.5px;color:#0c0c0c;transform:translate(0.92px,0) scaleX(1.0450);-webkit-text-stroke:.22px #0c0c0c;">-1.7%</div>
<div class="t" style="left:2369px;top:1201.55px;font-size:22.5px;color:#0c0c0c;transform:translate(0.43px,0) scaleX(1.0450);-webkit-text-stroke:.22px #0c0c0c;">221</div>
<div class="t" style="left:1318px;top:1201.55px;font-size:22.5px;color:#0c0c0c;transform:translate(0.33px,0) scaleX(0.8500);-webkit-text-stroke:.22px #0c0c0c;">$</div>
<div class="t" style="left:1487px;top:1201.55px;font-size:22.5px;color:#0c0c0c;transform:translate(0.93px,0) scaleX(0.8500);-webkit-text-stroke:.22px #0c0c0c;">$</div>
<div class="t" style="left:871px;top:1235.90px;font-size:22.8px;color:#0b670b;font-weight:700;transform:translate(0.32px,0) scaleX(0.9675);">Sub-Total</div>
<div class="t" style="left:1211px;top:1235.90px;font-size:22.8px;color:#0b670b;font-weight:700;transform:translate(0.21px,0) scaleX(1.0300);">137,603</div>
<div class="t" style="left:1347px;top:1235.90px;font-size:22.8px;color:#0b670b;font-weight:700;transform:translate(0.55px,0) scaleX(1.0300);">41,280,804</div>
<div class="t" style="left:1570px;top:1235.90px;font-size:22.8px;color:#0b670b;font-weight:700;transform:translate(0.57px,0) scaleX(1.0300);">37,202,976</div>
<div class="t" style="left:1773px;top:1235.90px;font-size:22.8px;color:#0b670b;font-weight:700;transform:translate(0.86px,0) scaleX(1.0300);">9.9%</div>
<div class="t" style="left:1922px;top:1235.90px;font-size:22.8px;color:#0b670b;font-weight:700;transform:translate(0.24px,0) scaleX(1.0300);">2,706</div>
<div class="t" style="left:2091px;top:1235.90px;font-size:22.8px;color:#0b670b;font-weight:700;transform:translate(0.44px,0) scaleX(1.0300);">2,746</div>
<div class="t" style="left:2226px;top:1235.90px;font-size:22.8px;color:#0b670b;font-weight:700;transform:translate(0.84px,0) scaleX(1.0300);">-1.5%</div>
<div class="t" style="left:2349px;top:1235.90px;font-size:22.8px;color:#0b670b;font-weight:700;transform:translate(0.43px,0) scaleX(1.0300);">1,631</div>
<div class="t" style="left:1318px;top:1235.90px;font-size:22.8px;color:#0b670b;font-weight:700;transform:translate(0.25px,0) scaleX(0.8430);">$</div>
<div class="t" style="left:1487px;top:1235.90px;font-size:22.8px;color:#0b670b;font-weight:700;transform:translate(0.85px,0) scaleX(0.8430);">$</div>
<div class="t" style="left:871px;top:1283.90px;font-size:22.8px;color:#000;font-weight:700;transform:translate(0.02px,0) scaleX(0.9789);">Grand Total</div>
<div class="t" style="left:1211px;top:1283.90px;font-size:22.8px;color:#000;font-weight:700;transform:translate(0.11px,0) scaleX(1.0300);">659,518</div>
<div class="t" style="left:1335px;top:1283.90px;font-size:22.8px;color:#000;font-weight:700;transform:translate(0.41px,0) scaleX(1.0300);">197,855,297</div>
<div class="t" style="left:1556px;top:1283.90px;font-size:22.8px;color:#000;font-weight:700;transform:translate(0.79px,0) scaleX(1.0300);">189,622,584</div>
<div class="t" style="left:1773px;top:1283.90px;font-size:22.8px;color:#000;font-weight:700;transform:translate(0.86px,0) scaleX(1.0300);">4.2%</div>
<div class="t" style="left:1910px;top:1283.90px;font-size:22.8px;color:#000;font-weight:700;transform:translate(0.47px,0) scaleX(1.0300);">11,266</div>
<div class="t" style="left:2078px;top:1283.90px;font-size:22.8px;color:#000;font-weight:700;transform:translate(0.17px,0) scaleX(1.0300);">10,901</div>
<div class="t" style="left:2234px;top:1283.90px;font-size:22.8px;color:#000;font-weight:700;transform:translate(0.66px,0) scaleX(1.0300);">3.2%</div>
<div class="t" style="left:2349px;top:1283.90px;font-size:22.8px;color:#000;font-weight:700;transform:translate(0.74px,0) scaleX(1.0300);">9,152</div>
<div class="t" style="left:1318px;top:1283.90px;font-size:22.8px;color:#000;font-weight:700;transform:translate(0.25px,0) scaleX(0.8430);">$</div>
<div class="t" style="left:1487px;top:1283.90px;font-size:22.8px;color:#000;font-weight:700;transform:translate(0.85px,0) scaleX(0.8430);">$</div>
<div class="t" style="left:569px;top:1364.60px;font-size:21.4px;color:#217346;font-weight:700;transform:translate(0.00px,0) scaleX(0.9975);">Membership Overview Report</div>
</div>
</div></body></html>
